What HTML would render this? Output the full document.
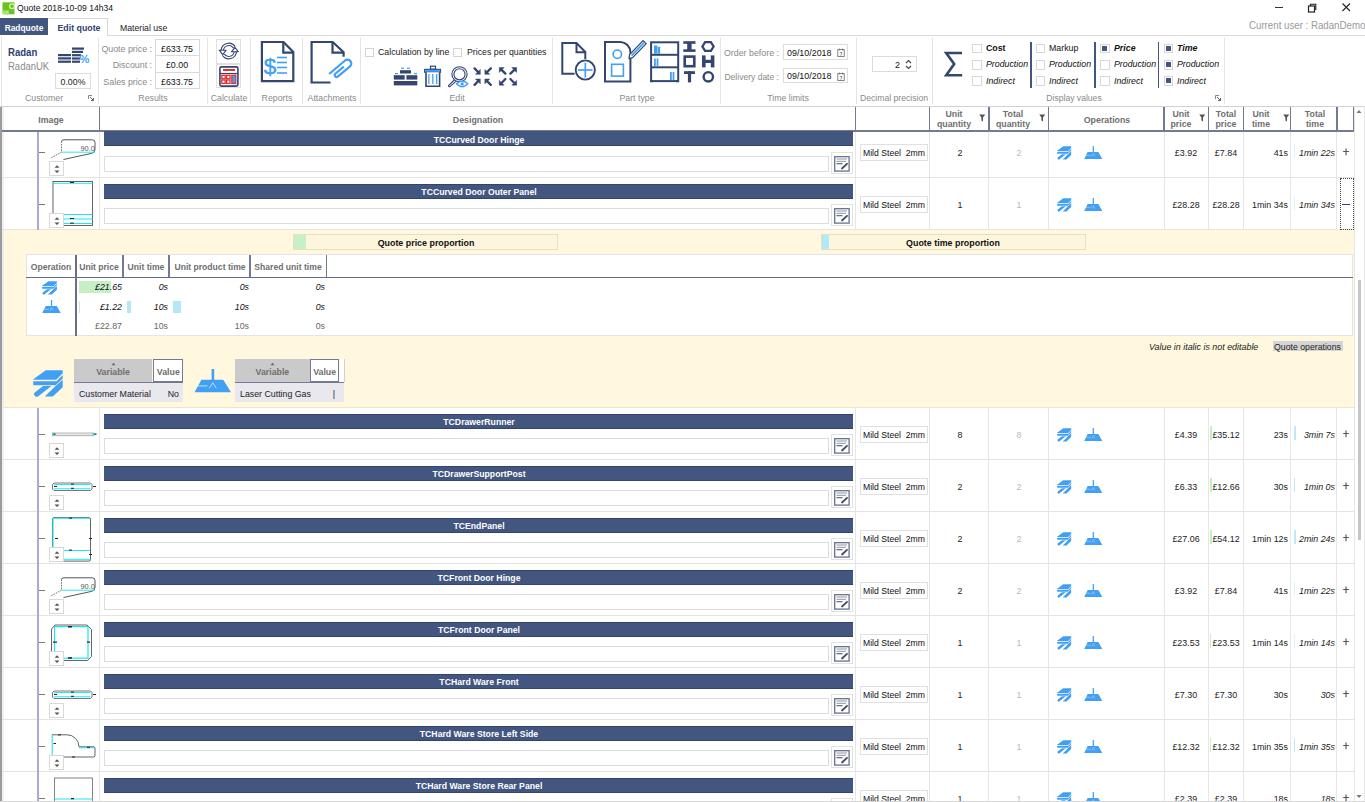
<!DOCTYPE html>
<html><head><meta charset="utf-8"><title>Quote</title>
<style>
html,body{margin:0;padding:0;width:1365px;height:802px;overflow:hidden;background:#fff}
body{position:relative;font-family:"Liberation Sans", sans-serif}
body>div,body>svg{position:absolute}
</style></head><body>
<div style="left:0px;top:0px;width:1365px;height:802px;background:#fff"></div>
<svg style="left:1.5px;top:2px;" width="13" height="13" viewBox="0 0 13 13"><rect x="0.5" y="0.3" width="12" height="12" fill="#6cc21c"/><circle cx="10" cy="4.2" r="2.4" fill="none" stroke="#d6f5b0" stroke-width="1.3"/><rect x="0.8" y="8.6" width="6" height="3.6" fill="#c9ee9e"/><text x="1.2" y="11.6" font-family="Liberation Sans" font-size="3.6" fill="#6cc21c">RQ</text></svg>
<div style="left:17px;top:4.00px;font-size:9.29px;line-height:9.29px;color:#111;font-weight:normal;font-style:normal;white-space:pre;transform:scaleX(0.9259);transform-origin:0 0;">Quote 2018-10-09 14h34</div>
<div style="left:1275px;top:7px;width:8px;height:1px;background:#333"></div>
<svg style="left:1307px;top:3px;" width="10" height="10" viewBox="0 0 10 10"><rect x="1.5" y="3" width="6" height="6" fill="none" stroke="#222" stroke-width="1.2"/><path d="M3.5 3V1.2h5.3v5.3H7.5" fill="none" stroke="#222" stroke-width="1.1"/></svg>
<svg style="left:1342px;top:3px;" width="9" height="9" viewBox="0 0 9 9"><path d="M0.5 0.5L8 8M8 0.5L0.5 8" stroke="#222" stroke-width="1.1"/></svg>
<div style="left:1249px;top:21.00px;font-size:10.48px;line-height:10.48px;color:#9a9a9a;font-weight:normal;font-style:normal;white-space:pre;transform:scaleX(0.9259);transform-origin:0 0;">Current user : RadanDemo</div>
<div style="left:0px;top:18px;width:48px;height:17px;background:#43567f"></div>
<div style="left:0.0px;width:48px;text-align:center;top:24.00px;font-size:9.07px;line-height:9.07px;color:#fff;font-weight:bold;font-style:normal;white-space:pre;transform:scaleX(0.9259);transform-origin:50% 0;">Radquote</div>
<div style="left:48px;top:18px;width:60px;height:18px;background:#fff;border-top:1px solid #d6d6d6;border-right:1px solid #d6d6d6;box-sizing:border-box"></div>
<div style="left:49.0px;width:60px;text-align:center;top:23.00px;font-size:9.50px;line-height:9.50px;color:#2f4270;font-weight:bold;font-style:normal;white-space:pre;transform:scaleX(0.9259);transform-origin:50% 0;">Edit quote</div>
<div style="left:120px;top:23.00px;font-size:9.40px;line-height:9.40px;color:#222;font-weight:normal;font-style:normal;white-space:pre;transform:scaleX(0.9259);transform-origin:0 0;">Material use</div>
<div style="left:108px;top:35px;width:1257px;height:1px;background:#d9d9d9"></div>
<div style="left:1px;top:36px;width:1px;height:70px;background:#e6e6e6"></div>
<div style="left:0px;top:105.5px;width:1365px;height:1.5px;background:#d2d2d2"></div>
<div style="left:97.5px;top:38px;width:1px;height:66px;background:#e3e3e3"></div>
<div style="left:207px;top:38px;width:1px;height:66px;background:#e3e3e3"></div>
<div style="left:249.5px;top:38px;width:1px;height:66px;background:#e3e3e3"></div>
<div style="left:302px;top:38px;width:1px;height:66px;background:#e3e3e3"></div>
<div style="left:359.5px;top:38px;width:1px;height:66px;background:#e3e3e3"></div>
<div style="left:552px;top:38px;width:1px;height:66px;background:#e3e3e3"></div>
<div style="left:720px;top:38px;width:1px;height:66px;background:#e3e3e3"></div>
<div style="left:855.5px;top:38px;width:1px;height:66px;background:#e3e3e3"></div>
<div style="left:932px;top:38px;width:1px;height:66px;background:#e3e3e3"></div>
<div style="left:1224px;top:38px;width:1px;height:66px;background:#e3e3e3"></div>
<div style="left:3.5px;width:80px;text-align:center;top:93.00px;font-size:9.50px;line-height:9.50px;color:#8a8a8a;font-weight:normal;font-style:normal;white-space:pre;transform:scaleX(0.9259);transform-origin:50% 0;">Customer</div>
<div style="left:113.0px;width:80px;text-align:center;top:93.00px;font-size:9.50px;line-height:9.50px;color:#8a8a8a;font-weight:normal;font-style:normal;white-space:pre;transform:scaleX(0.9259);transform-origin:50% 0;">Results</div>
<div style="left:199.0px;width:60px;text-align:center;top:93.00px;font-size:9.50px;line-height:9.50px;color:#8a8a8a;font-weight:normal;font-style:normal;white-space:pre;transform:scaleX(0.9259);transform-origin:50% 0;">Calculate</div>
<div style="left:246.5px;width:60px;text-align:center;top:93.00px;font-size:9.50px;line-height:9.50px;color:#8a8a8a;font-weight:normal;font-style:normal;white-space:pre;transform:scaleX(0.9259);transform-origin:50% 0;">Reports</div>
<div style="left:296.5px;width:70px;text-align:center;top:93.00px;font-size:9.50px;line-height:9.50px;color:#8a8a8a;font-weight:normal;font-style:normal;white-space:pre;transform:scaleX(0.9259);transform-origin:50% 0;">Attachments</div>
<div style="left:426.5px;width:60px;text-align:center;top:93.00px;font-size:9.50px;line-height:9.50px;color:#8a8a8a;font-weight:normal;font-style:normal;white-space:pre;transform:scaleX(0.9259);transform-origin:50% 0;">Edit</div>
<div style="left:597.0px;width:80px;text-align:center;top:93.00px;font-size:9.50px;line-height:9.50px;color:#8a8a8a;font-weight:normal;font-style:normal;white-space:pre;transform:scaleX(0.9259);transform-origin:50% 0;">Part type</div>
<div style="left:743.0px;width:90px;text-align:center;top:93.00px;font-size:9.50px;line-height:9.50px;color:#8a8a8a;font-weight:normal;font-style:normal;white-space:pre;transform:scaleX(0.9259);transform-origin:50% 0;">Time limits</div>
<div style="left:849.0px;width:90px;text-align:center;top:94.00px;font-size:9.34px;line-height:9.34px;color:#8a8a8a;font-weight:normal;font-style:normal;white-space:pre;transform:scaleX(0.9259);transform-origin:50% 0;">Decimal precision</div>
<div style="left:1028.5px;width:90px;text-align:center;top:94.00px;font-size:9.29px;line-height:9.29px;color:#8a8a8a;font-weight:normal;font-style:normal;white-space:pre;transform:scaleX(0.9259);transform-origin:50% 0;">Display values</div>
<svg style="left:88px;top:95px;" width="6" height="6" viewBox="0 0 6 6"><path d="M0.5 4V0.5H4" fill="none" stroke="#888" stroke-width="1"/><path d="M2 2L5.5 5.5M5.5 3V5.5H3" fill="none" stroke="#666" stroke-width="1"/></svg>
<svg style="left:1215px;top:95px;" width="6" height="6" viewBox="0 0 6 6"><path d="M0.5 4V0.5H4" fill="none" stroke="#888" stroke-width="1"/><path d="M2 2L5.5 5.5M5.5 3V5.5H3" fill="none" stroke="#666" stroke-width="1"/></svg>
<div style="left:7.5px;top:48.00px;font-size:10.37px;line-height:10.37px;color:#2f4270;font-weight:bold;font-style:normal;white-space:pre;transform:scaleX(0.9259);transform-origin:0 0;">Radan</div>
<div style="left:7.5px;top:62.00px;font-size:10.26px;line-height:10.26px;color:#8a8a8a;font-weight:normal;font-style:normal;white-space:pre;transform:scaleX(0.9259);transform-origin:0 0;">RadanUK</div>
<svg style="left:58px;top:47px;" width="32" height="16" viewBox="0 0 32 16"><g fill="#34466f"><rect x="0" y="7" width="13" height="2.2"/><rect x="0" y="10.3" width="13" height="2.2"/><rect x="0" y="13.6" width="13" height="2.2"/><rect x="14" y="0.5" width="12" height="2.2"/><rect x="14" y="3.8" width="11" height="2.2"/><rect x="14" y="7.1" width="9" height="2.2"/><rect x="14" y="10.4" width="8" height="2.2"/><rect x="14" y="13.6" width="8" height="2.2"/></g><text x="21.5" y="16" font-family="Liberation Sans" font-size="11" fill="#42a0f4" stroke="#42a0f4" stroke-width="0.3">%</text></svg>
<div style="left:55px;top:73px;width:35.5px;height:15.5px;border:1px solid #dcdcdc;box-sizing:border-box;background:#fff"></div>
<div style="left:54.75px;width:36px;text-align:center;top:77.00px;font-size:9.50px;line-height:9.50px;color:#222;font-weight:normal;font-style:normal;white-space:pre;transform:scaleX(0.9259);transform-origin:50% 0;">0.00%</div>
<div style="left:155px;top:39px;width:44.5px;height:49.5px;border:1px solid #d9d9d9;box-sizing:border-box;background:#fff"></div>
<div style="left:155px;top:55.3px;width:44.5px;height:1px;background:#d9d9d9"></div>
<div style="left:155px;top:71.8px;width:44.5px;height:1px;background:#d9d9d9"></div>
<div style="left:91.69999999999999px;width:60px;text-align:right;top:44.00px;font-size:9.56px;line-height:9.56px;color:#8a8a8a;font-weight:normal;font-style:normal;white-space:pre;transform:scaleX(0.9259);transform-origin:100% 0;">Quote price :</div>
<div style="left:155.25px;width:44px;text-align:center;top:44.00px;font-size:9.56px;line-height:9.56px;color:#111;font-weight:normal;font-style:normal;white-space:pre;transform:scaleX(0.9259);transform-origin:50% 0;">£633.75</div>
<div style="left:91.69999999999999px;width:60px;text-align:right;top:60.00px;font-size:9.56px;line-height:9.56px;color:#8a8a8a;font-weight:normal;font-style:normal;white-space:pre;transform:scaleX(0.9259);transform-origin:100% 0;">Discount :</div>
<div style="left:155.25px;width:44px;text-align:center;top:60.00px;font-size:9.56px;line-height:9.56px;color:#111;font-weight:normal;font-style:normal;white-space:pre;transform:scaleX(0.9259);transform-origin:50% 0;">£0.00</div>
<div style="left:91.69999999999999px;width:60px;text-align:right;top:77.00px;font-size:9.56px;line-height:9.56px;color:#8a8a8a;font-weight:normal;font-style:normal;white-space:pre;transform:scaleX(0.9259);transform-origin:100% 0;">Sales price :</div>
<div style="left:155.25px;width:44px;text-align:center;top:77.00px;font-size:9.56px;line-height:9.56px;color:#111;font-weight:normal;font-style:normal;white-space:pre;transform:scaleX(0.9259);transform-origin:50% 0;">£633.75</div>
<div style="left:216.3px;top:39.3px;width:24.7px;height:24.5px;border:1px solid #e0e0e0;box-sizing:border-box"></div>
<div style="left:216.3px;top:63.8px;width:24.7px;height:24.4px;border:1px solid #e0e0e0;box-sizing:border-box"></div>
<svg style="left:218px;top:41px;" width="22" height="21" viewBox="0 0 22 21"><g fill="none" stroke="#34466f" stroke-width="3.4"><path d="M4.23 9.42 A6.6 6.6 0 0 1 16.21 6.21"/><path d="M17.37 10.58 A6.6 6.6 0 0 1 5.39 13.79"/></g><g fill="none" stroke="#fff" stroke-width="1.3"><path d="M4.30 8.85 A6.6 6.6 0 0 1 16.00 5.94"/><path d="M17.30 11.15 A6.6 6.6 0 0 1 5.20 13.50"/></g><path d="M1.2 9.2 L8.2 9.2 L4.7 13.6 Z" fill="#fff" stroke="#34466f" stroke-width="1.1" stroke-linejoin="round"/><path d="M13.4 10.8 L20.4 10.8 L16.9 6.4 Z" fill="#fff" stroke="#34466f" stroke-width="1.1" stroke-linejoin="round"/></svg>
<svg style="left:219px;top:66px;" width="20" height="21" viewBox="0 0 20 21"><rect x="0.9" y="0.9" width="18" height="19.2" rx="1.5" fill="#fff" stroke="#34466f" stroke-width="1.6"/><rect x="4" y="3" width="12" height="2" fill="#e03030"/><line x1="1" y1="7.5" x2="19" y2="7.5" stroke="#34466f" stroke-width="1.2"/><g fill="none" stroke="#e03030" stroke-width="1.3"><rect x="2.8" y="9.3" width="3.4" height="3.4"/><rect x="7.6" y="9.3" width="3.4" height="3.4"/><rect x="2.8" y="14" width="3.4" height="3.4"/><rect x="7.6" y="14" width="3.4" height="3.4"/></g><rect x="12.8" y="9.2" width="4" height="8.4" fill="#42a0f4" stroke="#e03030" stroke-width="1.2"/></svg>
<svg style="left:259px;top:39px;" width="38" height="46" viewBox="0 0 38 46"><path d="M2.9 3 H24.5 L34.3 13 V42.2 H2.9 Z" fill="#fff" stroke="#34466f" stroke-width="2.2"/><path d="M24.3 3 V13.6 H34.3" fill="none" stroke="#34466f" stroke-width="2.2"/><text x="4.8" y="35" font-family="Liberation Sans" font-size="22.5" fill="#42a0f4" stroke="#42a0f4" stroke-width="0.4">$</text><g stroke="#42a0f4" stroke-width="1.6"><line x1="18" y1="18.5" x2="28" y2="18.5"/><line x1="18" y1="23.5" x2="28" y2="23.5"/><line x1="18" y1="28.5" x2="28" y2="28.5"/><line x1="18" y1="34" x2="28" y2="34"/></g></svg>
<svg style="left:308px;top:39px;" width="46" height="46" viewBox="0 0 46 46"><path d="M22.5 43.5 H3.6 V3 H24.7 L35.6 13.2 V17.8" fill="none" stroke="#34466f" stroke-width="2.2"/><path d="M24.5 3 V13.6 H35.6" fill="none" stroke="#34466f" stroke-width="2.2"/><path d="M21.07 34.99 L37.16 21.49 A3.8 3.8 0 0 1 42.04 27.31 L29.78 37.6 A1.9 1.9 0 0 1 27.34 34.7 L35.8 27.6" fill="none" stroke="#42a0f4" stroke-width="2.2"/></svg>
<div style="left:364.5px;top:47.5px;width:9px;height:9px;border:1px solid #d4d4d4;box-sizing:border-box;background:#fff"></div>
<div style="left:453px;top:47.5px;width:9px;height:9px;border:1px solid #d4d4d4;box-sizing:border-box;background:#fff"></div>
<div style="left:377.5px;top:47.00px;font-size:9.50px;line-height:9.50px;color:#222;font-weight:normal;font-style:normal;white-space:pre;transform:scaleX(0.9259);transform-origin:0 0;">Calculation by line</div>
<div style="left:466.5px;top:47.00px;font-size:9.47px;line-height:9.47px;color:#222;font-weight:normal;font-style:normal;white-space:pre;transform:scaleX(0.9259);transform-origin:0 0;">Prices per quantities</div>
<svg style="left:393px;top:66px;" width="26" height="21" viewBox="0 0 26 21"><g fill="#34466f"><rect x="7" y="4.2" width="11" height="3.3"/><rect x="0.8" y="9.2" width="10.9" height="4.4"/><rect x="13.4" y="9.2" width="10.9" height="4.4"/><rect x="0.8" y="15" width="23.5" height="4.4"/></g><g fill="#42a0f4"><rect x="8" y="1.6" width="3" height="1.2"/><rect x="14" y="1.6" width="3" height="1.2"/><rect x="2" y="7" width="3" height="1.2"/><rect x="21" y="7" width="3" height="1.2"/></g></svg>
<svg style="left:423px;top:65px;" width="19" height="23" viewBox="0 0 19 23"><rect x="7.5" y="1.2" width="5" height="3" fill="#fff" stroke="#34466f" stroke-width="1.2"/><rect x="1.6" y="4.3" width="16" height="3" fill="#42a0f4" stroke="#34466f" stroke-width="1"/><path d="M3 7.3 V21.3 H16.6 V7.3" fill="#fff" stroke="#34466f" stroke-width="1.6"/><g stroke="#42a0f4" stroke-width="1.3"><line x1="5.9" y1="9" x2="5.9" y2="19"/><line x1="9.8" y1="9" x2="9.8" y2="19"/><line x1="13.7" y1="9" x2="13.7" y2="19"/></g></svg>
<svg style="left:446px;top:64px;" width="24" height="24" viewBox="0 0 24 24"><circle cx="13.5" cy="10.3" r="7.6" fill="none" stroke="#34466f" stroke-width="1.1"/><circle cx="13.5" cy="10.3" r="5.6" fill="none" stroke="#34466f" stroke-width="1.1"/><path d="M8.3 16 L2.5 21.5 A1 1 0 0 0 4 22.6 L9.8 17.3" fill="none" stroke="#34466f" stroke-width="1.1"/><path d="M10.5 19.8 Q16 14.2 21.8 19.8 Q16 25.4 10.5 19.8 Z" fill="#fff" stroke="#42a0f4" stroke-width="1.5"/><circle cx="16.2" cy="19.8" r="1.6" fill="#42a0f4"/></svg>
<svg style="left:473px;top:67px;" width="20" height="20" viewBox="0 0 20 20"><line x1="1.6" y1="1.4" x2="5.8" y2="5.8" stroke="#34466f" stroke-width="2.3" stroke-linecap="round"/><path d="M7.3 7.3 L2.5 7.3 L7.3 2.5 Z" fill="#34466f" stroke="#34466f" stroke-width="0.5" stroke-linejoin="miter"/><line x1="17.8" y1="1.4" x2="13.4" y2="5.8" stroke="#34466f" stroke-width="2.3" stroke-linecap="round"/><path d="M11.9 7.3 L16.7 7.3 L11.9 2.5 Z" fill="#34466f" stroke="#34466f" stroke-width="0.5" stroke-linejoin="miter"/><line x1="1.6" y1="17.9" x2="5.8" y2="13.5" stroke="#34466f" stroke-width="2.3" stroke-linecap="round"/><path d="M7.3 12 L2.5 12 L7.3 16.8 Z" fill="#34466f" stroke="#34466f" stroke-width="0.5" stroke-linejoin="miter"/><line x1="17.8" y1="17.9" x2="13.4" y2="13.5" stroke="#34466f" stroke-width="2.3" stroke-linecap="round"/><path d="M11.9 12 L16.7 12 L11.9 16.8 Z" fill="#34466f" stroke="#34466f" stroke-width="0.5" stroke-linejoin="miter"/></svg>
<svg style="left:498px;top:67px;" width="20" height="20" viewBox="0 0 20 20"><line x1="7.4" y1="6.6" x2="2.8" y2="2.1" stroke="#34466f" stroke-width="2.3" stroke-linecap="round"/><path d="M1.3 0.6 L6.1 0.6 L1.3 5.3999999999999995 Z" fill="#34466f" stroke="#34466f" stroke-width="0.5" stroke-linejoin="miter"/><line x1="12.4" y1="6.6" x2="17.1" y2="2.1" stroke="#34466f" stroke-width="2.3" stroke-linecap="round"/><path d="M18.6 0.6 L13.8 0.6 L18.6 5.3999999999999995 Z" fill="#34466f" stroke="#34466f" stroke-width="0.5" stroke-linejoin="miter"/><line x1="7.4" y1="12" x2="2.8" y2="16.7" stroke="#34466f" stroke-width="2.3" stroke-linecap="round"/><path d="M1.3 18.2 L6.1 18.2 L1.3 13.399999999999999 Z" fill="#34466f" stroke="#34466f" stroke-width="0.5" stroke-linejoin="miter"/><line x1="12.4" y1="12" x2="17.1" y2="16.7" stroke="#34466f" stroke-width="2.3" stroke-linecap="round"/><path d="M18.6 18.2 L13.8 18.2 L18.6 13.399999999999999 Z" fill="#34466f" stroke="#34466f" stroke-width="0.5" stroke-linejoin="miter"/></svg>
<svg style="left:559px;top:40px;" width="40" height="44" viewBox="0 0 40 44"><path d="M15.5 33.8 H3.3 V3 H17.5 L26.3 12 V19" fill="none" stroke="#34466f" stroke-width="2"/><path d="M17.5 3 V12.3 H26.3" fill="none" stroke="#34466f" stroke-width="2"/><circle cx="26.3" cy="30" r="9.6" fill="#fff" stroke="#34466f" stroke-width="1.9"/><g stroke="#42a0f4" stroke-width="1.7"><line x1="19" y1="30" x2="33.5" y2="30"/><line x1="26.3" y1="22.7" x2="26.3" y2="37.5"/></g></svg>
<svg style="left:602px;top:39px;" width="46" height="45" viewBox="0 0 46 45"><path d="M3 2.9 H18.5 A10.5 10.5 0 0 1 28.4 13 V42.4 H3 Z" fill="#fff" stroke="#34466f" stroke-width="2"/><circle cx="15.3" cy="15.2" r="4.2" fill="none" stroke="#42a0f4" stroke-width="1.6"/><rect x="9.6" y="25.3" width="11.8" height="11.8" fill="none" stroke="#42a0f4" stroke-width="1.6"/><path d="M41.06 1.6 L44.2 4.6 L30.6 18.6 L27 19.6 L27.6 15.6 Z" fill="#fff" stroke="#34466f" stroke-width="1.3" stroke-linejoin="round"/><line x1="29.6" y1="16.6" x2="42" y2="3.7" stroke="#42a0f4" stroke-width="1.7"/></svg>
<svg style="left:648px;top:39px;" width="33" height="45" viewBox="0 0 33 45"><rect x="3.1" y="3.3" width="27.1" height="38.8" fill="#fff" stroke="#34466f" stroke-width="2"/><line x1="3" y1="15.8" x2="30" y2="15.8" stroke="#34466f" stroke-width="2"/><line x1="3" y1="28.3" x2="30" y2="28.3" stroke="#34466f" stroke-width="2"/><rect x="2.2" y="41" width="3" height="2.2" fill="#34466f"/><rect x="28" y="41" width="3" height="2.2" fill="#34466f"/><g fill="#42a0f4"><rect x="6" y="6.5" width="3.3" height="8.3"/><rect x="9.6" y="7.8" width="2.5" height="7"/><rect x="6" y="19.5" width="1.8" height="7.8"/><rect x="8.6" y="19.5" width="1.8" height="7.8"/><rect x="22" y="33" width="1.8" height="8"/><rect x="24.6" y="33" width="1.8" height="8"/></g></svg>
<svg style="left:682px;top:40px;" width="36" height="44" viewBox="0 0 36 44"><g fill="#34466f"><rect x="1.3" y="1.2" width="12.2" height="2.6"/><rect x="1.3" y="9.3" width="12.2" height="2.6"/><rect x="5.2" y="3" width="4.4" height="7"/><rect x="3" y="56.4" width="0" height="0"/></g><rect x="2.7" y="16.6" width="9.6" height="9.6" fill="none" stroke="#34466f" stroke-width="2.6"/><g fill="#34466f"><rect x="2" y="31.2" width="11" height="2.8"/><rect x="5.9" y="31.2" width="3.2" height="11.2"/></g><path d="M20.4 6.5 L23.1 2.2 H28.9 L31.6 6.5 L28.9 10.8 H23.1 Z" fill="none" stroke="#34466f" stroke-width="2.3"/><g fill="#34466f"><rect x="20" y="15.4" width="3.6" height="12"/><rect x="28.8" y="15.4" width="3.6" height="12"/><rect x="22" y="19.8" width="8" height="3.2"/></g><circle cx="26.3" cy="36.8" r="4.7" fill="none" stroke="#34466f" stroke-width="2.4"/></svg>
<div style="left:709px;width:70px;text-align:right;top:48.00px;font-size:9.55px;line-height:9.55px;color:#8a8a8a;font-weight:normal;font-style:normal;white-space:pre;transform:scaleX(0.9259);transform-origin:100% 0;">Order before :</div>
<div style="left:709px;width:70px;text-align:right;top:73.00px;font-size:9.23px;line-height:9.23px;color:#8a8a8a;font-weight:normal;font-style:normal;white-space:pre;transform:scaleX(0.9259);transform-origin:100% 0;">Delivery date :</div>
<div style="left:783.1px;top:44.3px;width:64.6px;height:15.4px;border:1px solid #dcdcdc;box-sizing:border-box;background:#fff"></div>
<div style="left:786.5px;top:48.00px;font-size:9.61px;line-height:9.61px;color:#111;font-weight:normal;font-style:normal;white-space:pre;transform:scaleX(0.9259);transform-origin:0 0;">09/10/2018</div>
<svg style="left:837px;top:47.8px;" width="8" height="9" viewBox="0 0 8 9"><rect x="0.8" y="1.5" width="6.4" height="7" fill="none" stroke="#777" stroke-width="0.9"/><path d="M2.5 0.5V2.5M5.5 0.5V2.5M2.8 4.5H5L3.8 7.5" fill="none" stroke="#777" stroke-width="0.8"/></svg>
<div style="left:783.1px;top:68px;width:64.6px;height:15.4px;border:1px solid #dcdcdc;box-sizing:border-box;background:#fff"></div>
<div style="left:786.5px;top:71.00px;font-size:9.61px;line-height:9.61px;color:#111;font-weight:normal;font-style:normal;white-space:pre;transform:scaleX(0.9259);transform-origin:0 0;">09/10/2018</div>
<svg style="left:837px;top:71.5px;" width="8" height="9" viewBox="0 0 8 9"><rect x="0.8" y="1.5" width="6.4" height="7" fill="none" stroke="#777" stroke-width="0.9"/><path d="M2.5 0.5V2.5M5.5 0.5V2.5M2.8 4.5H5L3.8 7.5" fill="none" stroke="#777" stroke-width="0.8"/></svg>
<div style="left:872px;top:56.2px;width:44.7px;height:15.4px;border:1px solid #dcdcdc;box-sizing:border-box;background:#fff"></div>
<div style="left:895px;top:60.00px;font-size:9.72px;line-height:9.72px;color:#111;font-weight:normal;font-style:normal;white-space:pre;transform:scaleX(0.9259);transform-origin:0 0;">2</div>
<svg style="left:905px;top:58.5px;" width="7" height="11" viewBox="0 0 7 11"><path d="M1 4L3.5 1.5L6 4" fill="none" stroke="#444" stroke-width="1.1"/><path d="M1 7L3.5 9.5L6 7" fill="none" stroke="#444" stroke-width="1.1"/></svg>
<svg style="left:943px;top:50px;" width="22" height="28" viewBox="0 0 22 28"><path d="M19 3 H3.2 L11.2 14 L3.2 25.2 H19.2" fill="none" stroke="#34466f" stroke-width="2.6" stroke-linejoin="miter"/></svg>
<div style="left:972.3px;top:43.8px;width:9.6px;height:9.6px;border:1px solid #d8d8d8;box-sizing:border-box;background:#fff"></div>
<div style="left:985.8px;top:43.00px;font-size:9.50px;line-height:9.50px;color:#111;font-weight:bold;font-style:normal;white-space:pre;transform:scaleX(0.9259);transform-origin:0 0;">Cost</div>
<div style="left:972.3px;top:60px;width:9.6px;height:9.6px;border:1px solid #d8d8d8;box-sizing:border-box;background:#fff"></div>
<div style="left:985.8px;top:59.00px;font-size:9.50px;line-height:9.50px;color:#111;font-weight:normal;font-style:italic;white-space:pre;transform:scaleX(0.9259);transform-origin:0 0;">Production</div>
<div style="left:972.3px;top:76px;width:9.6px;height:9.6px;border:1px solid #d8d8d8;box-sizing:border-box;background:#fff"></div>
<div style="left:985.8px;top:76.00px;font-size:9.50px;line-height:9.50px;color:#111;font-weight:normal;font-style:italic;white-space:pre;transform:scaleX(0.9259);transform-origin:0 0;">Indirect</div>
<div style="left:1035.8px;top:43.8px;width:9.6px;height:9.6px;border:1px solid #d8d8d8;box-sizing:border-box;background:#fff"></div>
<div style="left:1049.3px;top:43.00px;font-size:9.50px;line-height:9.50px;color:#111;font-weight:normal;font-style:normal;white-space:pre;transform:scaleX(0.9259);transform-origin:0 0;">Markup</div>
<div style="left:1035.8px;top:60px;width:9.6px;height:9.6px;border:1px solid #d8d8d8;box-sizing:border-box;background:#fff"></div>
<div style="left:1049.3px;top:59.00px;font-size:9.50px;line-height:9.50px;color:#111;font-weight:normal;font-style:italic;white-space:pre;transform:scaleX(0.9259);transform-origin:0 0;">Production</div>
<div style="left:1035.8px;top:76px;width:9.6px;height:9.6px;border:1px solid #d8d8d8;box-sizing:border-box;background:#fff"></div>
<div style="left:1049.3px;top:76.00px;font-size:9.50px;line-height:9.50px;color:#111;font-weight:normal;font-style:italic;white-space:pre;transform:scaleX(0.9259);transform-origin:0 0;">Indirect</div>
<div style="left:1100px;top:43.8px;width:9.6px;height:9.6px;border:1px solid #d8d8d8;box-sizing:border-box;background:#fff"></div>
<div style="left:1102.3px;top:46.099999999999994px;width:5px;height:5px;background:#43567f"></div>
<div style="left:1113.5px;top:43.00px;font-size:9.50px;line-height:9.50px;color:#111;font-weight:bold;font-style:italic;white-space:pre;transform:scaleX(0.9259);transform-origin:0 0;">Price</div>
<div style="left:1100px;top:60px;width:9.6px;height:9.6px;border:1px solid #d8d8d8;box-sizing:border-box;background:#fff"></div>
<div style="left:1113.5px;top:59.00px;font-size:9.50px;line-height:9.50px;color:#111;font-weight:normal;font-style:italic;white-space:pre;transform:scaleX(0.9259);transform-origin:0 0;">Production</div>
<div style="left:1100px;top:76px;width:9.6px;height:9.6px;border:1px solid #d8d8d8;box-sizing:border-box;background:#fff"></div>
<div style="left:1113.5px;top:76.00px;font-size:9.50px;line-height:9.50px;color:#111;font-weight:normal;font-style:italic;white-space:pre;transform:scaleX(0.9259);transform-origin:0 0;">Indirect</div>
<div style="left:1163.9px;top:43.8px;width:9.6px;height:9.6px;border:1px solid #d8d8d8;box-sizing:border-box;background:#fff"></div>
<div style="left:1166.2px;top:46.099999999999994px;width:5px;height:5px;background:#43567f"></div>
<div style="left:1177.4px;top:43.00px;font-size:9.50px;line-height:9.50px;color:#111;font-weight:bold;font-style:italic;white-space:pre;transform:scaleX(0.9259);transform-origin:0 0;">Time</div>
<div style="left:1163.9px;top:60px;width:9.6px;height:9.6px;border:1px solid #d8d8d8;box-sizing:border-box;background:#fff"></div>
<div style="left:1166.2px;top:62.3px;width:5px;height:5px;background:#43567f"></div>
<div style="left:1177.4px;top:59.00px;font-size:9.50px;line-height:9.50px;color:#111;font-weight:normal;font-style:italic;white-space:pre;transform:scaleX(0.9259);transform-origin:0 0;">Production</div>
<div style="left:1163.9px;top:76px;width:9.6px;height:9.6px;border:1px solid #d8d8d8;box-sizing:border-box;background:#fff"></div>
<div style="left:1166.2px;top:78.3px;width:5px;height:5px;background:#43567f"></div>
<div style="left:1177.4px;top:76.00px;font-size:9.50px;line-height:9.50px;color:#111;font-weight:normal;font-style:italic;white-space:pre;transform:scaleX(0.9259);transform-origin:0 0;">Indirect</div>
<div style="left:1030.2px;top:42.3px;width:1.6px;height:46.2px;background:#43567f"></div>
<div style="left:1094px;top:42.3px;width:1.6px;height:46.2px;background:#43567f"></div>
<div style="left:1157.8px;top:42.3px;width:1.6px;height:46.2px;background:#43567f"></div>
<div style="left:0px;top:106.5px;width:1.5px;height:695.5px;background:#9c9c9c"></div>
<div style="left:1.5px;top:106.5px;width:2px;height:695.5px;background:#f0f0f0"></div>
<div style="left:98.6px;top:107px;width:1.8px;height:24px;background:#747a95"></div>
<div style="left:854.6px;top:107px;width:1.8px;height:24px;background:#747a95"></div>
<div style="left:928.6px;top:107px;width:1.8px;height:24px;background:#747a95"></div>
<div style="left:987.8000000000001px;top:107px;width:1.8px;height:24px;background:#747a95"></div>
<div style="left:1047.6999999999998px;top:107px;width:1.8px;height:24px;background:#747a95"></div>
<div style="left:1163.1px;top:107px;width:1.8px;height:24px;background:#747a95"></div>
<div style="left:1207.6999999999998px;top:107px;width:1.8px;height:24px;background:#747a95"></div>
<div style="left:1242.6px;top:107px;width:1.8px;height:24px;background:#747a95"></div>
<div style="left:1289.5px;top:107px;width:1.8px;height:24px;background:#747a95"></div>
<div style="left:1335.8px;top:107px;width:1.8px;height:24px;background:#747a95"></div>
<div style="left:1353.1px;top:107px;width:1.8px;height:24px;background:#747a95"></div>
<div style="left:1.5px;top:130.2px;width:1353px;height:1.8px;background:#747a95"></div>
<div style="left:10.799999999999997px;width:80px;text-align:center;top:115.00px;font-size:9.50px;line-height:9.50px;color:#6f6f6f;font-weight:bold;font-style:normal;white-space:pre;transform:scaleX(0.9259);transform-origin:50% 0;">Image</div>
<div style="left:428.4px;width:100px;text-align:center;top:115.00px;font-size:9.50px;line-height:9.50px;color:#6f6f6f;font-weight:bold;font-style:normal;white-space:pre;transform:scaleX(0.9259);transform-origin:50% 0;">Designation</div>
<div style="left:1056.8px;width:100px;text-align:center;top:115.00px;font-size:9.50px;line-height:9.50px;color:#6f6f6f;font-weight:bold;font-style:normal;white-space:pre;transform:scaleX(0.9259);transform-origin:50% 0;">Operations</div>
<div style="left:923.6px;width:60px;text-align:center;top:109.00px;font-size:9.50px;line-height:9.50px;color:#6f6f6f;font-weight:bold;font-style:normal;white-space:pre;transform:scaleX(0.9259);transform-origin:50% 0;">Unit</div>
<div style="left:923.6px;width:60px;text-align:center;top:119.00px;font-size:9.50px;line-height:9.50px;color:#6f6f6f;font-weight:bold;font-style:normal;white-space:pre;transform:scaleX(0.9259);transform-origin:50% 0;">quantity</div>
<svg style="left:978.5px;top:114.3px;" width="7" height="8" viewBox="0 0 7 8"><path d="M0.2 0.4 H6.2 L4 3.4 V7.6 L2.4 6.6 V3.4 Z" fill="#555"/></svg>
<div style="left:983.0px;width:60px;text-align:center;top:109.00px;font-size:9.50px;line-height:9.50px;color:#6f6f6f;font-weight:bold;font-style:normal;white-space:pre;transform:scaleX(0.9259);transform-origin:50% 0;">Total</div>
<div style="left:983.0px;width:60px;text-align:center;top:119.00px;font-size:9.50px;line-height:9.50px;color:#6f6f6f;font-weight:bold;font-style:normal;white-space:pre;transform:scaleX(0.9259);transform-origin:50% 0;">quantity</div>
<svg style="left:1038.5px;top:114.3px;" width="7" height="8" viewBox="0 0 7 8"><path d="M0.2 0.4 H6.2 L4 3.4 V7.6 L2.4 6.6 V3.4 Z" fill="#555"/></svg>
<div style="left:1151.0px;width:60px;text-align:center;top:109.00px;font-size:9.50px;line-height:9.50px;color:#6f6f6f;font-weight:bold;font-style:normal;white-space:pre;transform:scaleX(0.9259);transform-origin:50% 0;">Unit</div>
<div style="left:1151.0px;width:60px;text-align:center;top:119.00px;font-size:9.50px;line-height:9.50px;color:#6f6f6f;font-weight:bold;font-style:normal;white-space:pre;transform:scaleX(0.9259);transform-origin:50% 0;">price</div>
<svg style="left:1198.5px;top:114.3px;" width="7" height="8" viewBox="0 0 7 8"><path d="M0.2 0.4 H6.2 L4 3.4 V7.6 L2.4 6.6 V3.4 Z" fill="#555"/></svg>
<div style="left:1196.0px;width:60px;text-align:center;top:109.00px;font-size:9.50px;line-height:9.50px;color:#6f6f6f;font-weight:bold;font-style:normal;white-space:pre;transform:scaleX(0.9259);transform-origin:50% 0;">Total</div>
<div style="left:1196.0px;width:60px;text-align:center;top:119.00px;font-size:9.50px;line-height:9.50px;color:#6f6f6f;font-weight:bold;font-style:normal;white-space:pre;transform:scaleX(0.9259);transform-origin:50% 0;">price</div>
<div style="left:1231.0px;width:60px;text-align:center;top:109.00px;font-size:9.50px;line-height:9.50px;color:#6f6f6f;font-weight:bold;font-style:normal;white-space:pre;transform:scaleX(0.9259);transform-origin:50% 0;">Unit</div>
<div style="left:1231.0px;width:60px;text-align:center;top:119.00px;font-size:9.50px;line-height:9.50px;color:#6f6f6f;font-weight:bold;font-style:normal;white-space:pre;transform:scaleX(0.9259);transform-origin:50% 0;">time</div>
<svg style="left:1282.5px;top:114.3px;" width="7" height="8" viewBox="0 0 7 8"><path d="M0.2 0.4 H6.2 L4 3.4 V7.6 L2.4 6.6 V3.4 Z" fill="#555"/></svg>
<div style="left:1284.5px;width:60px;text-align:center;top:109.00px;font-size:9.50px;line-height:9.50px;color:#6f6f6f;font-weight:bold;font-style:normal;white-space:pre;transform:scaleX(0.9259);transform-origin:50% 0;">Total</div>
<div style="left:1284.5px;width:60px;text-align:center;top:119.00px;font-size:9.50px;line-height:9.50px;color:#6f6f6f;font-weight:bold;font-style:normal;white-space:pre;transform:scaleX(0.9259);transform-origin:50% 0;">time</div>
<div style="left:1.5px;top:176.8px;width:1353px;height:1.5px;background:#e4e4e4"></div>
<div style="left:99.0px;top:131.5px;width:1px;height:46.0px;background:#e6e6e6"></div>
<div style="left:855.0px;top:131.5px;width:1px;height:46.0px;background:#e6e6e6"></div>
<div style="left:929.0px;top:131.5px;width:1px;height:46.0px;background:#e6e6e6"></div>
<div style="left:988.2px;top:131.5px;width:1px;height:46.0px;background:#e6e6e6"></div>
<div style="left:1048.1px;top:131.5px;width:1px;height:46.0px;background:#e6e6e6"></div>
<div style="left:1163.5px;top:131.5px;width:1px;height:46.0px;background:#e6e6e6"></div>
<div style="left:1208.1px;top:131.5px;width:1px;height:46.0px;background:#e6e6e6"></div>
<div style="left:1243.0px;top:131.5px;width:1px;height:46.0px;background:#e6e6e6"></div>
<div style="left:1289.9px;top:131.5px;width:1px;height:46.0px;background:#e6e6e6"></div>
<div style="left:1336.2px;top:131.5px;width:1px;height:46.0px;background:#e6e6e6"></div>
<div style="left:38px;top:152.0px;width:7px;height:1px;background:#777"></div>
<svg style="left:49px;top:138.5px;" width="48" height="25" viewBox="0 0 48 25"><path d="M12.5 2.5 Q12.5 0.8 15 0.8 H43.5 Q46 0.8 46 3.5 V10.5 Q46 14 42 14.5 L14.5 20.5" fill="none" stroke="#444" stroke-width="0.9"/><path d="M12.5 2.5 V13.2 L2.2 18.8" fill="none" stroke="#555" stroke-width="0.8" stroke-dasharray="1.6 1"/><line x1="12.5" y1="13.2" x2="46" y2="13.2" stroke="#19e6ee" stroke-width="0.9"/><text x="31.5" y="12.2" font-family="Liberation Sans" font-size="7.4" fill="#555">90.0</text></svg>
<div style="left:49.3px;top:161.1px;width:14.4px;height:14.6px;border:1px solid #d8d8d8;box-sizing:border-box;background:#fff"></div>
<svg style="left:53.5px;top:164.5px;" width="6" height="9" viewBox="0 0 6 9"><path d="M0.5 2.8 L3 0.3 L5.5 2.8 Z M0.5 5.6 L3 8.1 L5.5 5.6 Z" fill="#555"/></svg>
<div style="left:104px;top:131px;width:749px;height:15px;background:#43567f;border-bottom:1px solid #34426f;box-sizing:border-box"></div>
<div style="left:178.5px;width:600px;text-align:center;top:136.00px;font-size:8.87px;line-height:8.87px;color:#fff;font-weight:bold;font-style:normal;white-space:pre;transform:scaleX(0.9804);transform-origin:50% 0;">TCCurved Door Hinge</div>
<div style="left:104px;top:155.5px;width:724.5px;height:16.3px;border:1px solid #dcdcdc;box-sizing:border-box;background:#fff"></div>
<div style="left:830.5px;top:152.2px;width:22px;height:22.2px;border:1px solid #e2e2e2;box-sizing:border-box;background:#fff"></div>
<svg style="left:834px;top:156.0px;" width="16" height="16" viewBox="0 0 16 16"><rect x="0.7" y="0.7" width="14.4" height="14.4" fill="#fff" stroke="#66728c" stroke-width="1.3"/><g stroke="#8a94a8" stroke-width="1"><line x1="2.5" y1="3" x2="13" y2="3"/><line x1="2.5" y1="5.3" x2="12" y2="5.3"/></g><line x1="2.5" y1="7.7" x2="8.5" y2="7.7" stroke="#4f5a72" stroke-width="1.1"/><line x1="8" y1="12.5" x2="13" y2="7.8" stroke="#3d4a66" stroke-width="1.8" stroke-linecap="round"/></svg>
<div style="left:860.4px;top:144.0px;width:67.4px;height:16.5px;border:1px solid #e0e0e0;box-sizing:border-box;background:#fff"></div>
<div style="left:863px;top:149.00px;font-size:9.34px;line-height:9.34px;color:#111;font-weight:normal;font-style:normal;white-space:pre;transform:scaleX(0.9259);transform-origin:0 0;">Mild Steel  2mm</div>
<div style="left:939.5px;width:40px;text-align:center;top:148.00px;font-size:9.61px;line-height:9.61px;color:#222;font-weight:normal;font-style:normal;white-space:pre;transform:scaleX(0.9259);transform-origin:50% 0;">2</div>
<div style="left:998.6px;width:40px;text-align:center;top:148.00px;font-size:9.61px;line-height:9.61px;color:#b8b8b8;font-weight:normal;font-style:normal;white-space:pre;transform:scaleX(0.9259);transform-origin:50% 0;">2</div>
<svg style="left:1056.5px;top:146.0px;overflow:visible" width="14.5" height="14" viewBox="0 0 14.5 14"><svg viewBox="0 0 30 28" width="14.5" height="14" preserveAspectRatio="none"><clipPath id="mc1"><rect x="0" y="16.4" width="30" height="12"/></clipPath><g fill="#42a0f4"><path d="M0.3 9.5 L12.8 0.3 H29.7 V3.4 L23.2 10 H0.3 Z"/><path d="M0.3 11.4 H23.6 L29.7 5.2 V8.6 L22.6 15.4 H0.3 Z"/><path d="M11.8 27 L22.6 16.4 L29.7 9.9 V17.6 L19.8 27 Z"/></g><line x1="3.7" y1="24.6" x2="16.5" y2="14.5" stroke="#42a0f4" stroke-width="5.2" stroke-linecap="round" clip-path="url(#mc1)"/></svg></svg>
<svg style="left:1084px;top:145.5px;overflow:visible" width="18.5" height="13" viewBox="0 0 18.5 13"><svg viewBox="0 0 38 24" width="18.5" height="13" preserveAspectRatio="none"><rect x="17.8" y="0" width="2.6" height="11.5" fill="#42a0f4"/><path d="M7.5 11 H29.5 L37.6 23.8 H0.4 Z" fill="#42a0f4"/><path d="M4 17.2 H13.5 M15.5 19.5 L19 14 L22.5 19.5" fill="none" stroke="#cfe6fb" stroke-width="0.9"/></svg></svg>
<div style="left:1164.4px;width:44px;text-align:center;top:148.00px;font-size:9.61px;line-height:9.61px;color:#222;font-weight:normal;font-style:normal;white-space:pre;transform:scaleX(0.9259);transform-origin:50% 0;">£3.92</div>
<div style="left:1209.2px;width:34px;text-align:center;top:148.00px;font-size:9.61px;line-height:9.61px;color:#222;font-weight:normal;font-style:normal;white-space:pre;transform:scaleX(0.9259);transform-origin:50% 0;">£7.84</div>
<div style="left:1244px;width:44px;text-align:right;top:148.00px;font-size:9.61px;line-height:9.61px;color:#222;font-weight:normal;font-style:normal;white-space:pre;transform:scaleX(0.9259);transform-origin:100% 0;">41s</div>
<div style="left:1291px;width:44px;text-align:right;top:148.00px;font-size:9.61px;line-height:9.61px;color:#222;font-weight:normal;font-style:italic;white-space:pre;transform:scaleX(0.9259);transform-origin:100% 0;">1min 22s</div>
<div style="left:1294px;top:144.0px;width:1.2px;height:13.8px;background:#dcf3fb"></div>
<div style="left:1339.4px;width:14px;text-align:center;top:147.00px;font-size:11.88px;line-height:11.88px;color:#555;font-weight:normal;font-style:normal;white-space:pre;transform:scaleX(0.9259);transform-origin:50% 0;-webkit-text-stroke:0.3px #555;">+</div>
<div style="left:1.5px;top:228.8px;width:1353px;height:1.5px;background:#e4e4e4"></div>
<div style="left:99.0px;top:177.5px;width:1px;height:52px;background:#e6e6e6"></div>
<div style="left:855.0px;top:177.5px;width:1px;height:52px;background:#e6e6e6"></div>
<div style="left:929.0px;top:177.5px;width:1px;height:52px;background:#e6e6e6"></div>
<div style="left:988.2px;top:177.5px;width:1px;height:52px;background:#e6e6e6"></div>
<div style="left:1048.1px;top:177.5px;width:1px;height:52px;background:#e6e6e6"></div>
<div style="left:1163.5px;top:177.5px;width:1px;height:52px;background:#e6e6e6"></div>
<div style="left:1208.1px;top:177.5px;width:1px;height:52px;background:#e6e6e6"></div>
<div style="left:1243.0px;top:177.5px;width:1px;height:52px;background:#e6e6e6"></div>
<div style="left:1289.9px;top:177.5px;width:1px;height:52px;background:#e6e6e6"></div>
<div style="left:1336.2px;top:177.5px;width:1px;height:52px;background:#e6e6e6"></div>
<div style="left:38px;top:204.0px;width:7px;height:1px;background:#777"></div>
<svg style="left:52px;top:181.0px;" width="42" height="46" viewBox="0 0 42 46"><rect x="1" y="0.5" width="39.5" height="44" fill="none" stroke="#555" stroke-width="0.9"/><g stroke="#19e6ee" stroke-width="1.1"><line x1="1" y1="2.3" x2="40.5" y2="2.3"/><line x1="1" y1="33.5" x2="40.5" y2="33.5"/><line x1="1" y1="38" x2="40.5" y2="38"/><line x1="1" y1="42.5" x2="40.5" y2="42.5"/></g><g fill="#222"><rect x="18" y="1" width="4" height="1"/><rect x="18" y="37" width="4" height="1"/><rect x="18" y="41.6" width="4" height="1"/></g></svg>
<div style="left:49.3px;top:213.1px;width:14.4px;height:14.6px;border:1px solid #d8d8d8;box-sizing:border-box;background:#fff"></div>
<svg style="left:53.5px;top:216.5px;" width="6" height="9" viewBox="0 0 6 9"><path d="M0.5 2.8 L3 0.3 L5.5 2.8 Z M0.5 5.6 L3 8.1 L5.5 5.6 Z" fill="#555"/></svg>
<div style="left:104px;top:184.0px;width:749px;height:14.6px;background:#43567f;border-top:1px solid #31436f;border-bottom:1px solid #34426f;box-sizing:border-box"></div>
<div style="left:178.5px;width:600px;text-align:center;top:188.00px;font-size:8.87px;line-height:8.87px;color:#fff;font-weight:bold;font-style:normal;white-space:pre;transform:scaleX(0.9804);transform-origin:50% 0;">TCCurved Door Outer Panel</div>
<div style="left:104px;top:207.5px;width:724.5px;height:16.3px;border:1px solid #dcdcdc;box-sizing:border-box;background:#fff"></div>
<div style="left:830.5px;top:204.2px;width:22px;height:22.2px;border:1px solid #e2e2e2;box-sizing:border-box;background:#fff"></div>
<svg style="left:834px;top:208.0px;" width="16" height="16" viewBox="0 0 16 16"><rect x="0.7" y="0.7" width="14.4" height="14.4" fill="#fff" stroke="#66728c" stroke-width="1.3"/><g stroke="#8a94a8" stroke-width="1"><line x1="2.5" y1="3" x2="13" y2="3"/><line x1="2.5" y1="5.3" x2="12" y2="5.3"/></g><line x1="2.5" y1="7.7" x2="8.5" y2="7.7" stroke="#4f5a72" stroke-width="1.1"/><line x1="8" y1="12.5" x2="13" y2="7.8" stroke="#3d4a66" stroke-width="1.8" stroke-linecap="round"/></svg>
<div style="left:860.4px;top:196.0px;width:67.4px;height:16.5px;border:1px solid #e0e0e0;box-sizing:border-box;background:#fff"></div>
<div style="left:863px;top:201.00px;font-size:9.34px;line-height:9.34px;color:#111;font-weight:normal;font-style:normal;white-space:pre;transform:scaleX(0.9259);transform-origin:0 0;">Mild Steel  2mm</div>
<div style="left:939.5px;width:40px;text-align:center;top:200.00px;font-size:9.61px;line-height:9.61px;color:#222;font-weight:normal;font-style:normal;white-space:pre;transform:scaleX(0.9259);transform-origin:50% 0;">1</div>
<div style="left:998.6px;width:40px;text-align:center;top:200.00px;font-size:9.61px;line-height:9.61px;color:#b8b8b8;font-weight:normal;font-style:normal;white-space:pre;transform:scaleX(0.9259);transform-origin:50% 0;">1</div>
<svg style="left:1056.5px;top:198.0px;overflow:visible" width="14.5" height="14" viewBox="0 0 14.5 14"><svg viewBox="0 0 30 28" width="14.5" height="14" preserveAspectRatio="none"><clipPath id="mc2"><rect x="0" y="16.4" width="30" height="12"/></clipPath><g fill="#42a0f4"><path d="M0.3 9.5 L12.8 0.3 H29.7 V3.4 L23.2 10 H0.3 Z"/><path d="M0.3 11.4 H23.6 L29.7 5.2 V8.6 L22.6 15.4 H0.3 Z"/><path d="M11.8 27 L22.6 16.4 L29.7 9.9 V17.6 L19.8 27 Z"/></g><line x1="3.7" y1="24.6" x2="16.5" y2="14.5" stroke="#42a0f4" stroke-width="5.2" stroke-linecap="round" clip-path="url(#mc2)"/></svg></svg>
<svg style="left:1084px;top:197.5px;overflow:visible" width="18.5" height="13" viewBox="0 0 18.5 13"><svg viewBox="0 0 38 24" width="18.5" height="13" preserveAspectRatio="none"><rect x="17.8" y="0" width="2.6" height="11.5" fill="#42a0f4"/><path d="M7.5 11 H29.5 L37.6 23.8 H0.4 Z" fill="#42a0f4"/><path d="M4 17.2 H13.5 M15.5 19.5 L19 14 L22.5 19.5" fill="none" stroke="#cfe6fb" stroke-width="0.9"/></svg></svg>
<div style="left:1164.4px;width:44px;text-align:center;top:200.00px;font-size:9.61px;line-height:9.61px;color:#222;font-weight:normal;font-style:normal;white-space:pre;transform:scaleX(0.9259);transform-origin:50% 0;">£28.28</div>
<div style="left:1209.2px;width:34px;text-align:center;top:200.00px;font-size:9.61px;line-height:9.61px;color:#222;font-weight:normal;font-style:normal;white-space:pre;transform:scaleX(0.9259);transform-origin:50% 0;">£28.28</div>
<div style="left:1244px;width:44px;text-align:right;top:200.00px;font-size:9.61px;line-height:9.61px;color:#222;font-weight:normal;font-style:normal;white-space:pre;transform:scaleX(0.9259);transform-origin:100% 0;">1min 34s</div>
<div style="left:1291px;width:44px;text-align:right;top:200.00px;font-size:9.61px;line-height:9.61px;color:#222;font-weight:normal;font-style:italic;white-space:pre;transform:scaleX(0.9259);transform-origin:100% 0;">1min 34s</div>
<div style="left:1294px;top:196.0px;width:1.2px;height:13.8px;background:#dcf3fb"></div>
<div style="left:1340px;top:178.0px;width:13.5px;height:51.5px;border:1px dotted #444;box-sizing:border-box"></div>
<div style="left:1342px;top:203.5px;width:8px;height:1.5px;background:#2f4270"></div>
<div style="left:1.5px;top:458.8px;width:1353px;height:1.5px;background:#e4e4e4"></div>
<div style="left:99.0px;top:407.5px;width:1px;height:52px;background:#e6e6e6"></div>
<div style="left:855.0px;top:407.5px;width:1px;height:52px;background:#e6e6e6"></div>
<div style="left:929.0px;top:407.5px;width:1px;height:52px;background:#e6e6e6"></div>
<div style="left:988.2px;top:407.5px;width:1px;height:52px;background:#e6e6e6"></div>
<div style="left:1048.1px;top:407.5px;width:1px;height:52px;background:#e6e6e6"></div>
<div style="left:1163.5px;top:407.5px;width:1px;height:52px;background:#e6e6e6"></div>
<div style="left:1208.1px;top:407.5px;width:1px;height:52px;background:#e6e6e6"></div>
<div style="left:1243.0px;top:407.5px;width:1px;height:52px;background:#e6e6e6"></div>
<div style="left:1289.9px;top:407.5px;width:1px;height:52px;background:#e6e6e6"></div>
<div style="left:1336.2px;top:407.5px;width:1px;height:52px;background:#e6e6e6"></div>
<div style="left:38px;top:434.0px;width:7px;height:1px;background:#777"></div>
<svg style="left:51px;top:431.5px;" width="46" height="5" viewBox="0 0 46 5"><rect x="1.5" y="1" width="41" height="2.8" fill="#f4f4f4" stroke="#888" stroke-width="0.6"/><line x1="2" y1="3.3" x2="42" y2="3.3" stroke="#bbb" stroke-width="1"/><rect x="1.2" y="0.8" width="1.2" height="3" fill="#19e6ee"/><rect x="41.5" y="0.8" width="1.2" height="3" fill="#19e6ee"/><rect x="2.5" y="1.5" width="2" height="1.2" fill="#222"/><rect x="43" y="1.5" width="2.5" height="1.2" fill="#222"/></svg>
<div style="left:49.3px;top:443.1px;width:14.4px;height:14.6px;border:1px solid #d8d8d8;box-sizing:border-box;background:#fff"></div>
<svg style="left:53.5px;top:446.5px;" width="6" height="9" viewBox="0 0 6 9"><path d="M0.5 2.8 L3 0.3 L5.5 2.8 Z M0.5 5.6 L3 8.1 L5.5 5.6 Z" fill="#555"/></svg>
<div style="left:104px;top:414.0px;width:749px;height:14.6px;background:#43567f;border-top:1px solid #31436f;border-bottom:1px solid #34426f;box-sizing:border-box"></div>
<div style="left:178.5px;width:600px;text-align:center;top:418.00px;font-size:8.87px;line-height:8.87px;color:#fff;font-weight:bold;font-style:normal;white-space:pre;transform:scaleX(0.9804);transform-origin:50% 0;">TCDrawerRunner</div>
<div style="left:104px;top:437.5px;width:724.5px;height:16.3px;border:1px solid #dcdcdc;box-sizing:border-box;background:#fff"></div>
<div style="left:830.5px;top:434.2px;width:22px;height:22.2px;border:1px solid #e2e2e2;box-sizing:border-box;background:#fff"></div>
<svg style="left:834px;top:438.0px;" width="16" height="16" viewBox="0 0 16 16"><rect x="0.7" y="0.7" width="14.4" height="14.4" fill="#fff" stroke="#66728c" stroke-width="1.3"/><g stroke="#8a94a8" stroke-width="1"><line x1="2.5" y1="3" x2="13" y2="3"/><line x1="2.5" y1="5.3" x2="12" y2="5.3"/></g><line x1="2.5" y1="7.7" x2="8.5" y2="7.7" stroke="#4f5a72" stroke-width="1.1"/><line x1="8" y1="12.5" x2="13" y2="7.8" stroke="#3d4a66" stroke-width="1.8" stroke-linecap="round"/></svg>
<div style="left:860.4px;top:426.0px;width:67.4px;height:16.5px;border:1px solid #e0e0e0;box-sizing:border-box;background:#fff"></div>
<div style="left:863px;top:431.00px;font-size:9.34px;line-height:9.34px;color:#111;font-weight:normal;font-style:normal;white-space:pre;transform:scaleX(0.9259);transform-origin:0 0;">Mild Steel  2mm</div>
<div style="left:939.5px;width:40px;text-align:center;top:430.00px;font-size:9.61px;line-height:9.61px;color:#222;font-weight:normal;font-style:normal;white-space:pre;transform:scaleX(0.9259);transform-origin:50% 0;">8</div>
<div style="left:998.6px;width:40px;text-align:center;top:430.00px;font-size:9.61px;line-height:9.61px;color:#b8b8b8;font-weight:normal;font-style:normal;white-space:pre;transform:scaleX(0.9259);transform-origin:50% 0;">8</div>
<svg style="left:1056.5px;top:428.0px;overflow:visible" width="14.5" height="14" viewBox="0 0 14.5 14"><svg viewBox="0 0 30 28" width="14.5" height="14" preserveAspectRatio="none"><clipPath id="mc3"><rect x="0" y="16.4" width="30" height="12"/></clipPath><g fill="#42a0f4"><path d="M0.3 9.5 L12.8 0.3 H29.7 V3.4 L23.2 10 H0.3 Z"/><path d="M0.3 11.4 H23.6 L29.7 5.2 V8.6 L22.6 15.4 H0.3 Z"/><path d="M11.8 27 L22.6 16.4 L29.7 9.9 V17.6 L19.8 27 Z"/></g><line x1="3.7" y1="24.6" x2="16.5" y2="14.5" stroke="#42a0f4" stroke-width="5.2" stroke-linecap="round" clip-path="url(#mc3)"/></svg></svg>
<svg style="left:1084px;top:427.5px;overflow:visible" width="18.5" height="13" viewBox="0 0 18.5 13"><svg viewBox="0 0 38 24" width="18.5" height="13" preserveAspectRatio="none"><rect x="17.8" y="0" width="2.6" height="11.5" fill="#42a0f4"/><path d="M7.5 11 H29.5 L37.6 23.8 H0.4 Z" fill="#42a0f4"/><path d="M4 17.2 H13.5 M15.5 19.5 L19 14 L22.5 19.5" fill="none" stroke="#cfe6fb" stroke-width="0.9"/></svg></svg>
<div style="left:1164.4px;width:44px;text-align:center;top:430.00px;font-size:9.61px;line-height:9.61px;color:#222;font-weight:normal;font-style:normal;white-space:pre;transform:scaleX(0.9259);transform-origin:50% 0;">£4.39</div>
<div style="left:1209.2px;width:34px;text-align:center;top:430.00px;font-size:9.61px;line-height:9.61px;color:#222;font-weight:normal;font-style:normal;white-space:pre;transform:scaleX(0.9259);transform-origin:50% 0;">£35.12</div>
<div style="left:1244px;width:44px;text-align:right;top:430.00px;font-size:9.61px;line-height:9.61px;color:#222;font-weight:normal;font-style:normal;white-space:pre;transform:scaleX(0.9259);transform-origin:100% 0;">23s</div>
<div style="left:1291px;width:44px;text-align:right;top:430.00px;font-size:9.61px;line-height:9.61px;color:#222;font-weight:normal;font-style:italic;white-space:pre;transform:scaleX(0.9259);transform-origin:100% 0;">3min 7s</div>
<div style="left:1294px;top:426.0px;width:2.2px;height:13.8px;background:#bfe9f9"></div>
<div style="left:1210.2px;top:426.0px;width:2px;height:13.8px;background:#c6efc6"></div>
<div style="left:1339.4px;width:14px;text-align:center;top:429.00px;font-size:11.88px;line-height:11.88px;color:#555;font-weight:normal;font-style:normal;white-space:pre;transform:scaleX(0.9259);transform-origin:50% 0;-webkit-text-stroke:0.3px #555;">+</div>
<div style="left:1.5px;top:510.8px;width:1353px;height:1.5px;background:#e4e4e4"></div>
<div style="left:99.0px;top:459.5px;width:1px;height:52px;background:#e6e6e6"></div>
<div style="left:855.0px;top:459.5px;width:1px;height:52px;background:#e6e6e6"></div>
<div style="left:929.0px;top:459.5px;width:1px;height:52px;background:#e6e6e6"></div>
<div style="left:988.2px;top:459.5px;width:1px;height:52px;background:#e6e6e6"></div>
<div style="left:1048.1px;top:459.5px;width:1px;height:52px;background:#e6e6e6"></div>
<div style="left:1163.5px;top:459.5px;width:1px;height:52px;background:#e6e6e6"></div>
<div style="left:1208.1px;top:459.5px;width:1px;height:52px;background:#e6e6e6"></div>
<div style="left:1243.0px;top:459.5px;width:1px;height:52px;background:#e6e6e6"></div>
<div style="left:1289.9px;top:459.5px;width:1px;height:52px;background:#e6e6e6"></div>
<div style="left:1336.2px;top:459.5px;width:1px;height:52px;background:#e6e6e6"></div>
<div style="left:38px;top:486.0px;width:7px;height:1px;background:#777"></div>
<svg style="left:51px;top:481.5px;" width="46" height="10" viewBox="0 0 46 10"><path d="M3 1 H39.5 L41 2.5 V7 L39.5 8.5 H3 L1.5 7 V2.5 Z" fill="#fff" stroke="#555" stroke-width="0.8"/><g stroke="#19e6ee" stroke-width="1"><line x1="3" y1="2.6" x2="39.5" y2="2.6"/><line x1="3" y1="6.8" x2="39.5" y2="6.8"/></g><g fill="#222"><rect x="20" y="1.6" width="3" height="1"/><rect x="20" y="5.8" width="3" height="1"/><rect x="3" y="4" width="3" height="1"/><rect x="42" y="4" width="3" height="1"/></g></svg>
<div style="left:49.3px;top:495.1px;width:14.4px;height:14.6px;border:1px solid #d8d8d8;box-sizing:border-box;background:#fff"></div>
<svg style="left:53.5px;top:498.5px;" width="6" height="9" viewBox="0 0 6 9"><path d="M0.5 2.8 L3 0.3 L5.5 2.8 Z M0.5 5.6 L3 8.1 L5.5 5.6 Z" fill="#555"/></svg>
<div style="left:104px;top:466.0px;width:749px;height:14.6px;background:#43567f;border-top:1px solid #31436f;border-bottom:1px solid #34426f;box-sizing:border-box"></div>
<div style="left:178.5px;width:600px;text-align:center;top:470.00px;font-size:8.87px;line-height:8.87px;color:#fff;font-weight:bold;font-style:normal;white-space:pre;transform:scaleX(0.9804);transform-origin:50% 0;">TCDrawerSupportPost</div>
<div style="left:104px;top:489.5px;width:724.5px;height:16.3px;border:1px solid #dcdcdc;box-sizing:border-box;background:#fff"></div>
<div style="left:830.5px;top:486.2px;width:22px;height:22.2px;border:1px solid #e2e2e2;box-sizing:border-box;background:#fff"></div>
<svg style="left:834px;top:490.0px;" width="16" height="16" viewBox="0 0 16 16"><rect x="0.7" y="0.7" width="14.4" height="14.4" fill="#fff" stroke="#66728c" stroke-width="1.3"/><g stroke="#8a94a8" stroke-width="1"><line x1="2.5" y1="3" x2="13" y2="3"/><line x1="2.5" y1="5.3" x2="12" y2="5.3"/></g><line x1="2.5" y1="7.7" x2="8.5" y2="7.7" stroke="#4f5a72" stroke-width="1.1"/><line x1="8" y1="12.5" x2="13" y2="7.8" stroke="#3d4a66" stroke-width="1.8" stroke-linecap="round"/></svg>
<div style="left:860.4px;top:478.0px;width:67.4px;height:16.5px;border:1px solid #e0e0e0;box-sizing:border-box;background:#fff"></div>
<div style="left:863px;top:483.00px;font-size:9.34px;line-height:9.34px;color:#111;font-weight:normal;font-style:normal;white-space:pre;transform:scaleX(0.9259);transform-origin:0 0;">Mild Steel  2mm</div>
<div style="left:939.5px;width:40px;text-align:center;top:482.00px;font-size:9.61px;line-height:9.61px;color:#222;font-weight:normal;font-style:normal;white-space:pre;transform:scaleX(0.9259);transform-origin:50% 0;">2</div>
<div style="left:998.6px;width:40px;text-align:center;top:482.00px;font-size:9.61px;line-height:9.61px;color:#b8b8b8;font-weight:normal;font-style:normal;white-space:pre;transform:scaleX(0.9259);transform-origin:50% 0;">2</div>
<svg style="left:1056.5px;top:480.0px;overflow:visible" width="14.5" height="14" viewBox="0 0 14.5 14"><svg viewBox="0 0 30 28" width="14.5" height="14" preserveAspectRatio="none"><clipPath id="mc4"><rect x="0" y="16.4" width="30" height="12"/></clipPath><g fill="#42a0f4"><path d="M0.3 9.5 L12.8 0.3 H29.7 V3.4 L23.2 10 H0.3 Z"/><path d="M0.3 11.4 H23.6 L29.7 5.2 V8.6 L22.6 15.4 H0.3 Z"/><path d="M11.8 27 L22.6 16.4 L29.7 9.9 V17.6 L19.8 27 Z"/></g><line x1="3.7" y1="24.6" x2="16.5" y2="14.5" stroke="#42a0f4" stroke-width="5.2" stroke-linecap="round" clip-path="url(#mc4)"/></svg></svg>
<svg style="left:1084px;top:479.5px;overflow:visible" width="18.5" height="13" viewBox="0 0 18.5 13"><svg viewBox="0 0 38 24" width="18.5" height="13" preserveAspectRatio="none"><rect x="17.8" y="0" width="2.6" height="11.5" fill="#42a0f4"/><path d="M7.5 11 H29.5 L37.6 23.8 H0.4 Z" fill="#42a0f4"/><path d="M4 17.2 H13.5 M15.5 19.5 L19 14 L22.5 19.5" fill="none" stroke="#cfe6fb" stroke-width="0.9"/></svg></svg>
<div style="left:1164.4px;width:44px;text-align:center;top:482.00px;font-size:9.61px;line-height:9.61px;color:#222;font-weight:normal;font-style:normal;white-space:pre;transform:scaleX(0.9259);transform-origin:50% 0;">£6.33</div>
<div style="left:1209.2px;width:34px;text-align:center;top:482.00px;font-size:9.61px;line-height:9.61px;color:#222;font-weight:normal;font-style:normal;white-space:pre;transform:scaleX(0.9259);transform-origin:50% 0;">£12.66</div>
<div style="left:1244px;width:44px;text-align:right;top:482.00px;font-size:9.61px;line-height:9.61px;color:#222;font-weight:normal;font-style:normal;white-space:pre;transform:scaleX(0.9259);transform-origin:100% 0;">30s</div>
<div style="left:1291px;width:44px;text-align:right;top:482.00px;font-size:9.61px;line-height:9.61px;color:#222;font-weight:normal;font-style:italic;white-space:pre;transform:scaleX(0.9259);transform-origin:100% 0;">1min 0s</div>
<div style="left:1294px;top:478.0px;width:1.4px;height:13.8px;background:#bfe9f9"></div>
<div style="left:1210.2px;top:478.0px;width:1.4px;height:13.8px;background:#c6efc6"></div>
<div style="left:1339.4px;width:14px;text-align:center;top:481.00px;font-size:11.88px;line-height:11.88px;color:#555;font-weight:normal;font-style:normal;white-space:pre;transform:scaleX(0.9259);transform-origin:50% 0;-webkit-text-stroke:0.3px #555;">+</div>
<div style="left:1.5px;top:562.8px;width:1353px;height:1.5px;background:#e4e4e4"></div>
<div style="left:99.0px;top:511.5px;width:1px;height:52px;background:#e6e6e6"></div>
<div style="left:855.0px;top:511.5px;width:1px;height:52px;background:#e6e6e6"></div>
<div style="left:929.0px;top:511.5px;width:1px;height:52px;background:#e6e6e6"></div>
<div style="left:988.2px;top:511.5px;width:1px;height:52px;background:#e6e6e6"></div>
<div style="left:1048.1px;top:511.5px;width:1px;height:52px;background:#e6e6e6"></div>
<div style="left:1163.5px;top:511.5px;width:1px;height:52px;background:#e6e6e6"></div>
<div style="left:1208.1px;top:511.5px;width:1px;height:52px;background:#e6e6e6"></div>
<div style="left:1243.0px;top:511.5px;width:1px;height:52px;background:#e6e6e6"></div>
<div style="left:1289.9px;top:511.5px;width:1px;height:52px;background:#e6e6e6"></div>
<div style="left:1336.2px;top:511.5px;width:1px;height:52px;background:#e6e6e6"></div>
<div style="left:38px;top:538.0px;width:7px;height:1px;background:#777"></div>
<svg style="left:51px;top:516.5px;" width="42" height="45" viewBox="0 0 42 45"><rect x="1.5" y="0.6" width="38" height="43.5" rx="1.5" fill="none" stroke="#555" stroke-width="0.9"/><g stroke="#19e6ee" stroke-width="1.1"><line x1="2" y1="1.3" x2="2" y2="43"/><line x1="2" y1="33.5" x2="39" y2="33.5"/><line x1="2" y1="42.3" x2="39" y2="42.3"/><line x1="2" y1="1.3" x2="39" y2="1.3"/></g><g fill="#222"><rect x="18" y="0.6" width="3" height="1"/><rect x="4" y="21" width="3" height="1"/><rect x="38" y="21" width="3" height="1"/><rect x="18" y="32.6" width="3" height="1"/><rect x="38" y="37" width="3" height="1"/></g></svg>
<div style="left:49.3px;top:547.1px;width:14.4px;height:14.6px;border:1px solid #d8d8d8;box-sizing:border-box;background:#fff"></div>
<svg style="left:53.5px;top:550.5px;" width="6" height="9" viewBox="0 0 6 9"><path d="M0.5 2.8 L3 0.3 L5.5 2.8 Z M0.5 5.6 L3 8.1 L5.5 5.6 Z" fill="#555"/></svg>
<div style="left:104px;top:518.0px;width:749px;height:14.6px;background:#43567f;border-top:1px solid #31436f;border-bottom:1px solid #34426f;box-sizing:border-box"></div>
<div style="left:178.5px;width:600px;text-align:center;top:522.00px;font-size:8.87px;line-height:8.87px;color:#fff;font-weight:bold;font-style:normal;white-space:pre;transform:scaleX(0.9804);transform-origin:50% 0;">TCEndPanel</div>
<div style="left:104px;top:541.5px;width:724.5px;height:16.3px;border:1px solid #dcdcdc;box-sizing:border-box;background:#fff"></div>
<div style="left:830.5px;top:538.2px;width:22px;height:22.2px;border:1px solid #e2e2e2;box-sizing:border-box;background:#fff"></div>
<svg style="left:834px;top:542.0px;" width="16" height="16" viewBox="0 0 16 16"><rect x="0.7" y="0.7" width="14.4" height="14.4" fill="#fff" stroke="#66728c" stroke-width="1.3"/><g stroke="#8a94a8" stroke-width="1"><line x1="2.5" y1="3" x2="13" y2="3"/><line x1="2.5" y1="5.3" x2="12" y2="5.3"/></g><line x1="2.5" y1="7.7" x2="8.5" y2="7.7" stroke="#4f5a72" stroke-width="1.1"/><line x1="8" y1="12.5" x2="13" y2="7.8" stroke="#3d4a66" stroke-width="1.8" stroke-linecap="round"/></svg>
<div style="left:860.4px;top:530.0px;width:67.4px;height:16.5px;border:1px solid #e0e0e0;box-sizing:border-box;background:#fff"></div>
<div style="left:863px;top:535.00px;font-size:9.34px;line-height:9.34px;color:#111;font-weight:normal;font-style:normal;white-space:pre;transform:scaleX(0.9259);transform-origin:0 0;">Mild Steel  2mm</div>
<div style="left:939.5px;width:40px;text-align:center;top:534.00px;font-size:9.61px;line-height:9.61px;color:#222;font-weight:normal;font-style:normal;white-space:pre;transform:scaleX(0.9259);transform-origin:50% 0;">2</div>
<div style="left:998.6px;width:40px;text-align:center;top:534.00px;font-size:9.61px;line-height:9.61px;color:#b8b8b8;font-weight:normal;font-style:normal;white-space:pre;transform:scaleX(0.9259);transform-origin:50% 0;">2</div>
<svg style="left:1056.5px;top:532.0px;overflow:visible" width="14.5" height="14" viewBox="0 0 14.5 14"><svg viewBox="0 0 30 28" width="14.5" height="14" preserveAspectRatio="none"><clipPath id="mc5"><rect x="0" y="16.4" width="30" height="12"/></clipPath><g fill="#42a0f4"><path d="M0.3 9.5 L12.8 0.3 H29.7 V3.4 L23.2 10 H0.3 Z"/><path d="M0.3 11.4 H23.6 L29.7 5.2 V8.6 L22.6 15.4 H0.3 Z"/><path d="M11.8 27 L22.6 16.4 L29.7 9.9 V17.6 L19.8 27 Z"/></g><line x1="3.7" y1="24.6" x2="16.5" y2="14.5" stroke="#42a0f4" stroke-width="5.2" stroke-linecap="round" clip-path="url(#mc5)"/></svg></svg>
<svg style="left:1084px;top:531.5px;overflow:visible" width="18.5" height="13" viewBox="0 0 18.5 13"><svg viewBox="0 0 38 24" width="18.5" height="13" preserveAspectRatio="none"><rect x="17.8" y="0" width="2.6" height="11.5" fill="#42a0f4"/><path d="M7.5 11 H29.5 L37.6 23.8 H0.4 Z" fill="#42a0f4"/><path d="M4 17.2 H13.5 M15.5 19.5 L19 14 L22.5 19.5" fill="none" stroke="#cfe6fb" stroke-width="0.9"/></svg></svg>
<div style="left:1164.4px;width:44px;text-align:center;top:534.00px;font-size:9.61px;line-height:9.61px;color:#222;font-weight:normal;font-style:normal;white-space:pre;transform:scaleX(0.9259);transform-origin:50% 0;">£27.06</div>
<div style="left:1209.2px;width:34px;text-align:center;top:534.00px;font-size:9.61px;line-height:9.61px;color:#222;font-weight:normal;font-style:normal;white-space:pre;transform:scaleX(0.9259);transform-origin:50% 0;">£54.12</div>
<div style="left:1244px;width:44px;text-align:right;top:534.00px;font-size:9.61px;line-height:9.61px;color:#222;font-weight:normal;font-style:normal;white-space:pre;transform:scaleX(0.9259);transform-origin:100% 0;">1min 12s</div>
<div style="left:1291px;width:44px;text-align:right;top:534.00px;font-size:9.61px;line-height:9.61px;color:#222;font-weight:normal;font-style:italic;white-space:pre;transform:scaleX(0.9259);transform-origin:100% 0;">2min 24s</div>
<div style="left:1294px;top:530.0px;width:2.2px;height:13.8px;background:#bfe9f9"></div>
<div style="left:1210.2px;top:530.0px;width:2px;height:13.8px;background:#c6efc6"></div>
<div style="left:1339.4px;width:14px;text-align:center;top:533.00px;font-size:11.88px;line-height:11.88px;color:#555;font-weight:normal;font-style:normal;white-space:pre;transform:scaleX(0.9259);transform-origin:50% 0;-webkit-text-stroke:0.3px #555;">+</div>
<div style="left:1.5px;top:614.8px;width:1353px;height:1.5px;background:#e4e4e4"></div>
<div style="left:99.0px;top:563.5px;width:1px;height:52px;background:#e6e6e6"></div>
<div style="left:855.0px;top:563.5px;width:1px;height:52px;background:#e6e6e6"></div>
<div style="left:929.0px;top:563.5px;width:1px;height:52px;background:#e6e6e6"></div>
<div style="left:988.2px;top:563.5px;width:1px;height:52px;background:#e6e6e6"></div>
<div style="left:1048.1px;top:563.5px;width:1px;height:52px;background:#e6e6e6"></div>
<div style="left:1163.5px;top:563.5px;width:1px;height:52px;background:#e6e6e6"></div>
<div style="left:1208.1px;top:563.5px;width:1px;height:52px;background:#e6e6e6"></div>
<div style="left:1243.0px;top:563.5px;width:1px;height:52px;background:#e6e6e6"></div>
<div style="left:1289.9px;top:563.5px;width:1px;height:52px;background:#e6e6e6"></div>
<div style="left:1336.2px;top:563.5px;width:1px;height:52px;background:#e6e6e6"></div>
<div style="left:38px;top:590.0px;width:7px;height:1px;background:#777"></div>
<svg style="left:49px;top:576.5px;" width="48" height="25" viewBox="0 0 48 25"><path d="M12.5 2.5 Q12.5 0.8 15 0.8 H43.5 Q46 0.8 46 3.5 V10.5 Q46 14 42 14.5 L14.5 20.5" fill="none" stroke="#444" stroke-width="0.9"/><path d="M12.5 2.5 V13.2 L2.2 18.8" fill="none" stroke="#555" stroke-width="0.8" stroke-dasharray="1.6 1"/><line x1="12.5" y1="13.2" x2="46" y2="13.2" stroke="#19e6ee" stroke-width="0.9"/><text x="31.5" y="12.2" font-family="Liberation Sans" font-size="7.4" fill="#555">90.0</text></svg>
<div style="left:49.3px;top:599.1px;width:14.4px;height:14.6px;border:1px solid #d8d8d8;box-sizing:border-box;background:#fff"></div>
<svg style="left:53.5px;top:602.5px;" width="6" height="9" viewBox="0 0 6 9"><path d="M0.5 2.8 L3 0.3 L5.5 2.8 Z M0.5 5.6 L3 8.1 L5.5 5.6 Z" fill="#555"/></svg>
<div style="left:104px;top:570.0px;width:749px;height:14.6px;background:#43567f;border-top:1px solid #31436f;border-bottom:1px solid #34426f;box-sizing:border-box"></div>
<div style="left:178.5px;width:600px;text-align:center;top:574.00px;font-size:8.87px;line-height:8.87px;color:#fff;font-weight:bold;font-style:normal;white-space:pre;transform:scaleX(0.9804);transform-origin:50% 0;">TCFront Door Hinge</div>
<div style="left:104px;top:593.5px;width:724.5px;height:16.3px;border:1px solid #dcdcdc;box-sizing:border-box;background:#fff"></div>
<div style="left:830.5px;top:590.2px;width:22px;height:22.2px;border:1px solid #e2e2e2;box-sizing:border-box;background:#fff"></div>
<svg style="left:834px;top:594.0px;" width="16" height="16" viewBox="0 0 16 16"><rect x="0.7" y="0.7" width="14.4" height="14.4" fill="#fff" stroke="#66728c" stroke-width="1.3"/><g stroke="#8a94a8" stroke-width="1"><line x1="2.5" y1="3" x2="13" y2="3"/><line x1="2.5" y1="5.3" x2="12" y2="5.3"/></g><line x1="2.5" y1="7.7" x2="8.5" y2="7.7" stroke="#4f5a72" stroke-width="1.1"/><line x1="8" y1="12.5" x2="13" y2="7.8" stroke="#3d4a66" stroke-width="1.8" stroke-linecap="round"/></svg>
<div style="left:860.4px;top:582.0px;width:67.4px;height:16.5px;border:1px solid #e0e0e0;box-sizing:border-box;background:#fff"></div>
<div style="left:863px;top:587.00px;font-size:9.34px;line-height:9.34px;color:#111;font-weight:normal;font-style:normal;white-space:pre;transform:scaleX(0.9259);transform-origin:0 0;">Mild Steel  2mm</div>
<div style="left:939.5px;width:40px;text-align:center;top:586.00px;font-size:9.61px;line-height:9.61px;color:#222;font-weight:normal;font-style:normal;white-space:pre;transform:scaleX(0.9259);transform-origin:50% 0;">2</div>
<div style="left:998.6px;width:40px;text-align:center;top:586.00px;font-size:9.61px;line-height:9.61px;color:#b8b8b8;font-weight:normal;font-style:normal;white-space:pre;transform:scaleX(0.9259);transform-origin:50% 0;">2</div>
<svg style="left:1056.5px;top:584.0px;overflow:visible" width="14.5" height="14" viewBox="0 0 14.5 14"><svg viewBox="0 0 30 28" width="14.5" height="14" preserveAspectRatio="none"><clipPath id="mc6"><rect x="0" y="16.4" width="30" height="12"/></clipPath><g fill="#42a0f4"><path d="M0.3 9.5 L12.8 0.3 H29.7 V3.4 L23.2 10 H0.3 Z"/><path d="M0.3 11.4 H23.6 L29.7 5.2 V8.6 L22.6 15.4 H0.3 Z"/><path d="M11.8 27 L22.6 16.4 L29.7 9.9 V17.6 L19.8 27 Z"/></g><line x1="3.7" y1="24.6" x2="16.5" y2="14.5" stroke="#42a0f4" stroke-width="5.2" stroke-linecap="round" clip-path="url(#mc6)"/></svg></svg>
<svg style="left:1084px;top:583.5px;overflow:visible" width="18.5" height="13" viewBox="0 0 18.5 13"><svg viewBox="0 0 38 24" width="18.5" height="13" preserveAspectRatio="none"><rect x="17.8" y="0" width="2.6" height="11.5" fill="#42a0f4"/><path d="M7.5 11 H29.5 L37.6 23.8 H0.4 Z" fill="#42a0f4"/><path d="M4 17.2 H13.5 M15.5 19.5 L19 14 L22.5 19.5" fill="none" stroke="#cfe6fb" stroke-width="0.9"/></svg></svg>
<div style="left:1164.4px;width:44px;text-align:center;top:586.00px;font-size:9.61px;line-height:9.61px;color:#222;font-weight:normal;font-style:normal;white-space:pre;transform:scaleX(0.9259);transform-origin:50% 0;">£3.92</div>
<div style="left:1209.2px;width:34px;text-align:center;top:586.00px;font-size:9.61px;line-height:9.61px;color:#222;font-weight:normal;font-style:normal;white-space:pre;transform:scaleX(0.9259);transform-origin:50% 0;">£7.84</div>
<div style="left:1244px;width:44px;text-align:right;top:586.00px;font-size:9.61px;line-height:9.61px;color:#222;font-weight:normal;font-style:normal;white-space:pre;transform:scaleX(0.9259);transform-origin:100% 0;">41s</div>
<div style="left:1291px;width:44px;text-align:right;top:586.00px;font-size:9.61px;line-height:9.61px;color:#222;font-weight:normal;font-style:italic;white-space:pre;transform:scaleX(0.9259);transform-origin:100% 0;">1min 22s</div>
<div style="left:1294px;top:582.0px;width:1.2px;height:13.8px;background:#dcf3fb"></div>
<div style="left:1339.4px;width:14px;text-align:center;top:585.00px;font-size:11.88px;line-height:11.88px;color:#555;font-weight:normal;font-style:normal;white-space:pre;transform:scaleX(0.9259);transform-origin:50% 0;-webkit-text-stroke:0.3px #555;">+</div>
<div style="left:1.5px;top:666.8px;width:1353px;height:1.5px;background:#e4e4e4"></div>
<div style="left:99.0px;top:615.5px;width:1px;height:52px;background:#e6e6e6"></div>
<div style="left:855.0px;top:615.5px;width:1px;height:52px;background:#e6e6e6"></div>
<div style="left:929.0px;top:615.5px;width:1px;height:52px;background:#e6e6e6"></div>
<div style="left:988.2px;top:615.5px;width:1px;height:52px;background:#e6e6e6"></div>
<div style="left:1048.1px;top:615.5px;width:1px;height:52px;background:#e6e6e6"></div>
<div style="left:1163.5px;top:615.5px;width:1px;height:52px;background:#e6e6e6"></div>
<div style="left:1208.1px;top:615.5px;width:1px;height:52px;background:#e6e6e6"></div>
<div style="left:1243.0px;top:615.5px;width:1px;height:52px;background:#e6e6e6"></div>
<div style="left:1289.9px;top:615.5px;width:1px;height:52px;background:#e6e6e6"></div>
<div style="left:1336.2px;top:615.5px;width:1px;height:52px;background:#e6e6e6"></div>
<div style="left:38px;top:642.0px;width:7px;height:1px;background:#777"></div>
<svg style="left:50px;top:624.0px;" width="44" height="40" viewBox="0 0 44 40"><path d="M5 1 H37 L41.5 5.5 V32.5 L37.5 36.5 H5 L1.5 33 V5 Z" fill="none" stroke="#555" stroke-width="0.9"/><rect x="4.6" y="2.6" width="33.4" height="31.6" fill="none" stroke="#19e6ee" stroke-width="1.2"/><g fill="#222"><rect x="18" y="2" width="4" height="1.5"/><rect x="3" y="17.5" width="4" height="1.2"/><rect x="37" y="17.5" width="3" height="1.2"/><rect x="18" y="33.2" width="4" height="1.5"/></g></svg>
<div style="left:49.3px;top:651.1px;width:14.4px;height:14.6px;border:1px solid #d8d8d8;box-sizing:border-box;background:#fff"></div>
<svg style="left:53.5px;top:654.5px;" width="6" height="9" viewBox="0 0 6 9"><path d="M0.5 2.8 L3 0.3 L5.5 2.8 Z M0.5 5.6 L3 8.1 L5.5 5.6 Z" fill="#555"/></svg>
<div style="left:104px;top:622.0px;width:749px;height:14.6px;background:#43567f;border-top:1px solid #31436f;border-bottom:1px solid #34426f;box-sizing:border-box"></div>
<div style="left:178.5px;width:600px;text-align:center;top:626.00px;font-size:8.87px;line-height:8.87px;color:#fff;font-weight:bold;font-style:normal;white-space:pre;transform:scaleX(0.9804);transform-origin:50% 0;">TCFront Door Panel</div>
<div style="left:104px;top:645.5px;width:724.5px;height:16.3px;border:1px solid #dcdcdc;box-sizing:border-box;background:#fff"></div>
<div style="left:830.5px;top:642.2px;width:22px;height:22.2px;border:1px solid #e2e2e2;box-sizing:border-box;background:#fff"></div>
<svg style="left:834px;top:646.0px;" width="16" height="16" viewBox="0 0 16 16"><rect x="0.7" y="0.7" width="14.4" height="14.4" fill="#fff" stroke="#66728c" stroke-width="1.3"/><g stroke="#8a94a8" stroke-width="1"><line x1="2.5" y1="3" x2="13" y2="3"/><line x1="2.5" y1="5.3" x2="12" y2="5.3"/></g><line x1="2.5" y1="7.7" x2="8.5" y2="7.7" stroke="#4f5a72" stroke-width="1.1"/><line x1="8" y1="12.5" x2="13" y2="7.8" stroke="#3d4a66" stroke-width="1.8" stroke-linecap="round"/></svg>
<div style="left:860.4px;top:634.0px;width:67.4px;height:16.5px;border:1px solid #e0e0e0;box-sizing:border-box;background:#fff"></div>
<div style="left:863px;top:639.00px;font-size:9.34px;line-height:9.34px;color:#111;font-weight:normal;font-style:normal;white-space:pre;transform:scaleX(0.9259);transform-origin:0 0;">Mild Steel  2mm</div>
<div style="left:939.5px;width:40px;text-align:center;top:638.00px;font-size:9.61px;line-height:9.61px;color:#222;font-weight:normal;font-style:normal;white-space:pre;transform:scaleX(0.9259);transform-origin:50% 0;">1</div>
<div style="left:998.6px;width:40px;text-align:center;top:638.00px;font-size:9.61px;line-height:9.61px;color:#b8b8b8;font-weight:normal;font-style:normal;white-space:pre;transform:scaleX(0.9259);transform-origin:50% 0;">1</div>
<svg style="left:1056.5px;top:636.0px;overflow:visible" width="14.5" height="14" viewBox="0 0 14.5 14"><svg viewBox="0 0 30 28" width="14.5" height="14" preserveAspectRatio="none"><clipPath id="mc7"><rect x="0" y="16.4" width="30" height="12"/></clipPath><g fill="#42a0f4"><path d="M0.3 9.5 L12.8 0.3 H29.7 V3.4 L23.2 10 H0.3 Z"/><path d="M0.3 11.4 H23.6 L29.7 5.2 V8.6 L22.6 15.4 H0.3 Z"/><path d="M11.8 27 L22.6 16.4 L29.7 9.9 V17.6 L19.8 27 Z"/></g><line x1="3.7" y1="24.6" x2="16.5" y2="14.5" stroke="#42a0f4" stroke-width="5.2" stroke-linecap="round" clip-path="url(#mc7)"/></svg></svg>
<svg style="left:1084px;top:635.5px;overflow:visible" width="18.5" height="13" viewBox="0 0 18.5 13"><svg viewBox="0 0 38 24" width="18.5" height="13" preserveAspectRatio="none"><rect x="17.8" y="0" width="2.6" height="11.5" fill="#42a0f4"/><path d="M7.5 11 H29.5 L37.6 23.8 H0.4 Z" fill="#42a0f4"/><path d="M4 17.2 H13.5 M15.5 19.5 L19 14 L22.5 19.5" fill="none" stroke="#cfe6fb" stroke-width="0.9"/></svg></svg>
<div style="left:1164.4px;width:44px;text-align:center;top:638.00px;font-size:9.61px;line-height:9.61px;color:#222;font-weight:normal;font-style:normal;white-space:pre;transform:scaleX(0.9259);transform-origin:50% 0;">£23.53</div>
<div style="left:1209.2px;width:34px;text-align:center;top:638.00px;font-size:9.61px;line-height:9.61px;color:#222;font-weight:normal;font-style:normal;white-space:pre;transform:scaleX(0.9259);transform-origin:50% 0;">£23.53</div>
<div style="left:1244px;width:44px;text-align:right;top:638.00px;font-size:9.61px;line-height:9.61px;color:#222;font-weight:normal;font-style:normal;white-space:pre;transform:scaleX(0.9259);transform-origin:100% 0;">1min 14s</div>
<div style="left:1291px;width:44px;text-align:right;top:638.00px;font-size:9.61px;line-height:9.61px;color:#222;font-weight:normal;font-style:italic;white-space:pre;transform:scaleX(0.9259);transform-origin:100% 0;">1min 14s</div>
<div style="left:1294px;top:634.0px;width:1.2px;height:13.8px;background:#dcf3fb"></div>
<div style="left:1210.2px;top:634.0px;width:1.2px;height:13.8px;background:#c6efc6"></div>
<div style="left:1339.4px;width:14px;text-align:center;top:637.00px;font-size:11.88px;line-height:11.88px;color:#555;font-weight:normal;font-style:normal;white-space:pre;transform:scaleX(0.9259);transform-origin:50% 0;-webkit-text-stroke:0.3px #555;">+</div>
<div style="left:1.5px;top:718.8px;width:1353px;height:1.5px;background:#e4e4e4"></div>
<div style="left:99.0px;top:667.5px;width:1px;height:52px;background:#e6e6e6"></div>
<div style="left:855.0px;top:667.5px;width:1px;height:52px;background:#e6e6e6"></div>
<div style="left:929.0px;top:667.5px;width:1px;height:52px;background:#e6e6e6"></div>
<div style="left:988.2px;top:667.5px;width:1px;height:52px;background:#e6e6e6"></div>
<div style="left:1048.1px;top:667.5px;width:1px;height:52px;background:#e6e6e6"></div>
<div style="left:1163.5px;top:667.5px;width:1px;height:52px;background:#e6e6e6"></div>
<div style="left:1208.1px;top:667.5px;width:1px;height:52px;background:#e6e6e6"></div>
<div style="left:1243.0px;top:667.5px;width:1px;height:52px;background:#e6e6e6"></div>
<div style="left:1289.9px;top:667.5px;width:1px;height:52px;background:#e6e6e6"></div>
<div style="left:1336.2px;top:667.5px;width:1px;height:52px;background:#e6e6e6"></div>
<div style="left:38px;top:694.0px;width:7px;height:1px;background:#777"></div>
<svg style="left:51px;top:689.5px;" width="46" height="10" viewBox="0 0 46 10"><path d="M3 1 H39.5 L41 2.5 V7 L39.5 8.5 H3 L1.5 7 V2.5 Z" fill="#fff" stroke="#555" stroke-width="0.8"/><g stroke="#19e6ee" stroke-width="1"><line x1="3" y1="2.6" x2="39.5" y2="2.6"/><line x1="3" y1="6.8" x2="39.5" y2="6.8"/></g><g fill="#222"><rect x="20" y="1.6" width="3" height="1"/><rect x="20" y="5.8" width="3" height="1"/><rect x="3" y="4" width="3" height="1"/><rect x="42" y="4" width="3" height="1"/></g></svg>
<div style="left:49.3px;top:703.1px;width:14.4px;height:14.6px;border:1px solid #d8d8d8;box-sizing:border-box;background:#fff"></div>
<svg style="left:53.5px;top:706.5px;" width="6" height="9" viewBox="0 0 6 9"><path d="M0.5 2.8 L3 0.3 L5.5 2.8 Z M0.5 5.6 L3 8.1 L5.5 5.6 Z" fill="#555"/></svg>
<div style="left:104px;top:674.0px;width:749px;height:14.6px;background:#43567f;border-top:1px solid #31436f;border-bottom:1px solid #34426f;box-sizing:border-box"></div>
<div style="left:178.5px;width:600px;text-align:center;top:678.00px;font-size:8.87px;line-height:8.87px;color:#fff;font-weight:bold;font-style:normal;white-space:pre;transform:scaleX(0.9804);transform-origin:50% 0;">TCHard Ware Front</div>
<div style="left:104px;top:697.5px;width:724.5px;height:16.3px;border:1px solid #dcdcdc;box-sizing:border-box;background:#fff"></div>
<div style="left:830.5px;top:694.2px;width:22px;height:22.2px;border:1px solid #e2e2e2;box-sizing:border-box;background:#fff"></div>
<svg style="left:834px;top:698.0px;" width="16" height="16" viewBox="0 0 16 16"><rect x="0.7" y="0.7" width="14.4" height="14.4" fill="#fff" stroke="#66728c" stroke-width="1.3"/><g stroke="#8a94a8" stroke-width="1"><line x1="2.5" y1="3" x2="13" y2="3"/><line x1="2.5" y1="5.3" x2="12" y2="5.3"/></g><line x1="2.5" y1="7.7" x2="8.5" y2="7.7" stroke="#4f5a72" stroke-width="1.1"/><line x1="8" y1="12.5" x2="13" y2="7.8" stroke="#3d4a66" stroke-width="1.8" stroke-linecap="round"/></svg>
<div style="left:860.4px;top:686.0px;width:67.4px;height:16.5px;border:1px solid #e0e0e0;box-sizing:border-box;background:#fff"></div>
<div style="left:863px;top:691.00px;font-size:9.34px;line-height:9.34px;color:#111;font-weight:normal;font-style:normal;white-space:pre;transform:scaleX(0.9259);transform-origin:0 0;">Mild Steel  2mm</div>
<div style="left:939.5px;width:40px;text-align:center;top:690.00px;font-size:9.61px;line-height:9.61px;color:#222;font-weight:normal;font-style:normal;white-space:pre;transform:scaleX(0.9259);transform-origin:50% 0;">1</div>
<div style="left:998.6px;width:40px;text-align:center;top:690.00px;font-size:9.61px;line-height:9.61px;color:#b8b8b8;font-weight:normal;font-style:normal;white-space:pre;transform:scaleX(0.9259);transform-origin:50% 0;">1</div>
<svg style="left:1056.5px;top:688.0px;overflow:visible" width="14.5" height="14" viewBox="0 0 14.5 14"><svg viewBox="0 0 30 28" width="14.5" height="14" preserveAspectRatio="none"><clipPath id="mc8"><rect x="0" y="16.4" width="30" height="12"/></clipPath><g fill="#42a0f4"><path d="M0.3 9.5 L12.8 0.3 H29.7 V3.4 L23.2 10 H0.3 Z"/><path d="M0.3 11.4 H23.6 L29.7 5.2 V8.6 L22.6 15.4 H0.3 Z"/><path d="M11.8 27 L22.6 16.4 L29.7 9.9 V17.6 L19.8 27 Z"/></g><line x1="3.7" y1="24.6" x2="16.5" y2="14.5" stroke="#42a0f4" stroke-width="5.2" stroke-linecap="round" clip-path="url(#mc8)"/></svg></svg>
<svg style="left:1084px;top:687.5px;overflow:visible" width="18.5" height="13" viewBox="0 0 18.5 13"><svg viewBox="0 0 38 24" width="18.5" height="13" preserveAspectRatio="none"><rect x="17.8" y="0" width="2.6" height="11.5" fill="#42a0f4"/><path d="M7.5 11 H29.5 L37.6 23.8 H0.4 Z" fill="#42a0f4"/><path d="M4 17.2 H13.5 M15.5 19.5 L19 14 L22.5 19.5" fill="none" stroke="#cfe6fb" stroke-width="0.9"/></svg></svg>
<div style="left:1164.4px;width:44px;text-align:center;top:690.00px;font-size:9.61px;line-height:9.61px;color:#222;font-weight:normal;font-style:normal;white-space:pre;transform:scaleX(0.9259);transform-origin:50% 0;">£7.30</div>
<div style="left:1209.2px;width:34px;text-align:center;top:690.00px;font-size:9.61px;line-height:9.61px;color:#222;font-weight:normal;font-style:normal;white-space:pre;transform:scaleX(0.9259);transform-origin:50% 0;">£7.30</div>
<div style="left:1244px;width:44px;text-align:right;top:690.00px;font-size:9.61px;line-height:9.61px;color:#222;font-weight:normal;font-style:normal;white-space:pre;transform:scaleX(0.9259);transform-origin:100% 0;">30s</div>
<div style="left:1291px;width:44px;text-align:right;top:690.00px;font-size:9.61px;line-height:9.61px;color:#222;font-weight:normal;font-style:italic;white-space:pre;transform:scaleX(0.9259);transform-origin:100% 0;">30s</div>
<div style="left:1339.4px;width:14px;text-align:center;top:689.00px;font-size:11.88px;line-height:11.88px;color:#555;font-weight:normal;font-style:normal;white-space:pre;transform:scaleX(0.9259);transform-origin:50% 0;-webkit-text-stroke:0.3px #555;">+</div>
<div style="left:1.5px;top:770.8px;width:1353px;height:1.5px;background:#e4e4e4"></div>
<div style="left:99.0px;top:719.5px;width:1px;height:52px;background:#e6e6e6"></div>
<div style="left:855.0px;top:719.5px;width:1px;height:52px;background:#e6e6e6"></div>
<div style="left:929.0px;top:719.5px;width:1px;height:52px;background:#e6e6e6"></div>
<div style="left:988.2px;top:719.5px;width:1px;height:52px;background:#e6e6e6"></div>
<div style="left:1048.1px;top:719.5px;width:1px;height:52px;background:#e6e6e6"></div>
<div style="left:1163.5px;top:719.5px;width:1px;height:52px;background:#e6e6e6"></div>
<div style="left:1208.1px;top:719.5px;width:1px;height:52px;background:#e6e6e6"></div>
<div style="left:1243.0px;top:719.5px;width:1px;height:52px;background:#e6e6e6"></div>
<div style="left:1289.9px;top:719.5px;width:1px;height:52px;background:#e6e6e6"></div>
<div style="left:1336.2px;top:719.5px;width:1px;height:52px;background:#e6e6e6"></div>
<div style="left:38px;top:746.0px;width:7px;height:1px;background:#777"></div>
<svg style="left:50px;top:734.0px;" width="47" height="26" viewBox="0 0 47 26"><path d="M2 0.8 H17 A12 12 0 0 1 29 12.8 H44 L45 14 V22 L44 23 H13 V24.5" fill="none" stroke="#555" stroke-width="0.9"/><line x1="2.2" y1="0.8" x2="2.2" y2="23" stroke="#19e6ee" stroke-width="1.1"/><line x1="29" y1="13.8" x2="44" y2="13.8" stroke="#19e6ee" stroke-width="1"/><g fill="#222"><rect x="8" y="0.4" width="3" height="1"/><rect x="3.5" y="9" width="2.5" height="1"/><rect x="37" y="12.8" width="3" height="1"/><rect x="22" y="22.5" width="3" height="1"/></g></svg>
<div style="left:49.3px;top:755.1px;width:14.4px;height:14.6px;border:1px solid #d8d8d8;box-sizing:border-box;background:#fff"></div>
<svg style="left:53.5px;top:758.5px;" width="6" height="9" viewBox="0 0 6 9"><path d="M0.5 2.8 L3 0.3 L5.5 2.8 Z M0.5 5.6 L3 8.1 L5.5 5.6 Z" fill="#555"/></svg>
<div style="left:104px;top:726.0px;width:749px;height:14.6px;background:#43567f;border-top:1px solid #31436f;border-bottom:1px solid #34426f;box-sizing:border-box"></div>
<div style="left:178.5px;width:600px;text-align:center;top:730.00px;font-size:8.87px;line-height:8.87px;color:#fff;font-weight:bold;font-style:normal;white-space:pre;transform:scaleX(0.9804);transform-origin:50% 0;">TCHard Ware Store Left Side</div>
<div style="left:104px;top:749.5px;width:724.5px;height:16.3px;border:1px solid #dcdcdc;box-sizing:border-box;background:#fff"></div>
<div style="left:830.5px;top:746.2px;width:22px;height:22.2px;border:1px solid #e2e2e2;box-sizing:border-box;background:#fff"></div>
<svg style="left:834px;top:750.0px;" width="16" height="16" viewBox="0 0 16 16"><rect x="0.7" y="0.7" width="14.4" height="14.4" fill="#fff" stroke="#66728c" stroke-width="1.3"/><g stroke="#8a94a8" stroke-width="1"><line x1="2.5" y1="3" x2="13" y2="3"/><line x1="2.5" y1="5.3" x2="12" y2="5.3"/></g><line x1="2.5" y1="7.7" x2="8.5" y2="7.7" stroke="#4f5a72" stroke-width="1.1"/><line x1="8" y1="12.5" x2="13" y2="7.8" stroke="#3d4a66" stroke-width="1.8" stroke-linecap="round"/></svg>
<div style="left:860.4px;top:738.0px;width:67.4px;height:16.5px;border:1px solid #e0e0e0;box-sizing:border-box;background:#fff"></div>
<div style="left:863px;top:743.00px;font-size:9.34px;line-height:9.34px;color:#111;font-weight:normal;font-style:normal;white-space:pre;transform:scaleX(0.9259);transform-origin:0 0;">Mild Steel  2mm</div>
<div style="left:939.5px;width:40px;text-align:center;top:742.00px;font-size:9.61px;line-height:9.61px;color:#222;font-weight:normal;font-style:normal;white-space:pre;transform:scaleX(0.9259);transform-origin:50% 0;">1</div>
<div style="left:998.6px;width:40px;text-align:center;top:742.00px;font-size:9.61px;line-height:9.61px;color:#b8b8b8;font-weight:normal;font-style:normal;white-space:pre;transform:scaleX(0.9259);transform-origin:50% 0;">1</div>
<svg style="left:1056.5px;top:740.0px;overflow:visible" width="14.5" height="14" viewBox="0 0 14.5 14"><svg viewBox="0 0 30 28" width="14.5" height="14" preserveAspectRatio="none"><clipPath id="mc9"><rect x="0" y="16.4" width="30" height="12"/></clipPath><g fill="#42a0f4"><path d="M0.3 9.5 L12.8 0.3 H29.7 V3.4 L23.2 10 H0.3 Z"/><path d="M0.3 11.4 H23.6 L29.7 5.2 V8.6 L22.6 15.4 H0.3 Z"/><path d="M11.8 27 L22.6 16.4 L29.7 9.9 V17.6 L19.8 27 Z"/></g><line x1="3.7" y1="24.6" x2="16.5" y2="14.5" stroke="#42a0f4" stroke-width="5.2" stroke-linecap="round" clip-path="url(#mc9)"/></svg></svg>
<svg style="left:1084px;top:739.5px;overflow:visible" width="18.5" height="13" viewBox="0 0 18.5 13"><svg viewBox="0 0 38 24" width="18.5" height="13" preserveAspectRatio="none"><rect x="17.8" y="0" width="2.6" height="11.5" fill="#42a0f4"/><path d="M7.5 11 H29.5 L37.6 23.8 H0.4 Z" fill="#42a0f4"/><path d="M4 17.2 H13.5 M15.5 19.5 L19 14 L22.5 19.5" fill="none" stroke="#cfe6fb" stroke-width="0.9"/></svg></svg>
<div style="left:1164.4px;width:44px;text-align:center;top:742.00px;font-size:9.61px;line-height:9.61px;color:#222;font-weight:normal;font-style:normal;white-space:pre;transform:scaleX(0.9259);transform-origin:50% 0;">£12.32</div>
<div style="left:1209.2px;width:34px;text-align:center;top:742.00px;font-size:9.61px;line-height:9.61px;color:#222;font-weight:normal;font-style:normal;white-space:pre;transform:scaleX(0.9259);transform-origin:50% 0;">£12.32</div>
<div style="left:1244px;width:44px;text-align:right;top:742.00px;font-size:9.61px;line-height:9.61px;color:#222;font-weight:normal;font-style:normal;white-space:pre;transform:scaleX(0.9259);transform-origin:100% 0;">1min 35s</div>
<div style="left:1291px;width:44px;text-align:right;top:742.00px;font-size:9.61px;line-height:9.61px;color:#222;font-weight:normal;font-style:italic;white-space:pre;transform:scaleX(0.9259);transform-origin:100% 0;">1min 35s</div>
<div style="left:1294px;top:738.0px;width:1.4px;height:13.8px;background:#bfe9f9"></div>
<div style="left:1210.2px;top:738.0px;width:1.2px;height:13.8px;background:#c6efc6"></div>
<div style="left:1339.4px;width:14px;text-align:center;top:741.00px;font-size:11.88px;line-height:11.88px;color:#555;font-weight:normal;font-style:normal;white-space:pre;transform:scaleX(0.9259);transform-origin:50% 0;-webkit-text-stroke:0.3px #555;">+</div>
<div style="left:1.5px;top:822.8px;width:1353px;height:1.5px;background:#e4e4e4"></div>
<div style="left:99.0px;top:771.5px;width:1px;height:52px;background:#e6e6e6"></div>
<div style="left:855.0px;top:771.5px;width:1px;height:52px;background:#e6e6e6"></div>
<div style="left:929.0px;top:771.5px;width:1px;height:52px;background:#e6e6e6"></div>
<div style="left:988.2px;top:771.5px;width:1px;height:52px;background:#e6e6e6"></div>
<div style="left:1048.1px;top:771.5px;width:1px;height:52px;background:#e6e6e6"></div>
<div style="left:1163.5px;top:771.5px;width:1px;height:52px;background:#e6e6e6"></div>
<div style="left:1208.1px;top:771.5px;width:1px;height:52px;background:#e6e6e6"></div>
<div style="left:1243.0px;top:771.5px;width:1px;height:52px;background:#e6e6e6"></div>
<div style="left:1289.9px;top:771.5px;width:1px;height:52px;background:#e6e6e6"></div>
<div style="left:1336.2px;top:771.5px;width:1px;height:52px;background:#e6e6e6"></div>
<div style="left:38px;top:798.0px;width:7px;height:1px;background:#777"></div>
<svg style="left:51px;top:776.0px;" width="46" height="30" viewBox="0 0 46 30"><rect x="3.5" y="2" width="38" height="28" fill="none" stroke="#777" stroke-width="0.9"/><line x1="3.5" y1="23" x2="41.5" y2="23" stroke="#19e6ee" stroke-width="1"/><rect x="20" y="22" width="3" height="1.2" fill="#222"/></svg>
<div style="left:49.3px;top:807.1px;width:14.4px;height:14.6px;border:1px solid #d8d8d8;box-sizing:border-box;background:#fff"></div>
<svg style="left:53.5px;top:810.5px;" width="6" height="9" viewBox="0 0 6 9"><path d="M0.5 2.8 L3 0.3 L5.5 2.8 Z M0.5 5.6 L3 8.1 L5.5 5.6 Z" fill="#555"/></svg>
<div style="left:104px;top:778.0px;width:749px;height:14.6px;background:#43567f;border-top:1px solid #31436f;border-bottom:1px solid #34426f;box-sizing:border-box"></div>
<div style="left:178.5px;width:600px;text-align:center;top:782.00px;font-size:8.87px;line-height:8.87px;color:#fff;font-weight:bold;font-style:normal;white-space:pre;transform:scaleX(0.9804);transform-origin:50% 0;">TCHard Ware Store Rear Panel</div>
<div style="left:104px;top:801.5px;width:724.5px;height:16.3px;border:1px solid #dcdcdc;box-sizing:border-box;background:#fff"></div>
<div style="left:830.5px;top:798.2px;width:22px;height:22.2px;border:1px solid #e2e2e2;box-sizing:border-box;background:#fff"></div>
<svg style="left:834px;top:802.0px;" width="16" height="16" viewBox="0 0 16 16"><rect x="0.7" y="0.7" width="14.4" height="14.4" fill="#fff" stroke="#66728c" stroke-width="1.3"/><g stroke="#8a94a8" stroke-width="1"><line x1="2.5" y1="3" x2="13" y2="3"/><line x1="2.5" y1="5.3" x2="12" y2="5.3"/></g><line x1="2.5" y1="7.7" x2="8.5" y2="7.7" stroke="#4f5a72" stroke-width="1.1"/><line x1="8" y1="12.5" x2="13" y2="7.8" stroke="#3d4a66" stroke-width="1.8" stroke-linecap="round"/></svg>
<div style="left:860.4px;top:790.0px;width:67.4px;height:16.5px;border:1px solid #e0e0e0;box-sizing:border-box;background:#fff"></div>
<div style="left:863px;top:795.00px;font-size:9.34px;line-height:9.34px;color:#111;font-weight:normal;font-style:normal;white-space:pre;transform:scaleX(0.9259);transform-origin:0 0;">Mild Steel  2mm</div>
<div style="left:939.5px;width:40px;text-align:center;top:794.00px;font-size:9.61px;line-height:9.61px;color:#222;font-weight:normal;font-style:normal;white-space:pre;transform:scaleX(0.9259);transform-origin:50% 0;">1</div>
<div style="left:998.6px;width:40px;text-align:center;top:794.00px;font-size:9.61px;line-height:9.61px;color:#b8b8b8;font-weight:normal;font-style:normal;white-space:pre;transform:scaleX(0.9259);transform-origin:50% 0;">1</div>
<svg style="left:1056.5px;top:792.0px;overflow:visible" width="14.5" height="14" viewBox="0 0 14.5 14"><svg viewBox="0 0 30 28" width="14.5" height="14" preserveAspectRatio="none"><clipPath id="mc10"><rect x="0" y="16.4" width="30" height="12"/></clipPath><g fill="#42a0f4"><path d="M0.3 9.5 L12.8 0.3 H29.7 V3.4 L23.2 10 H0.3 Z"/><path d="M0.3 11.4 H23.6 L29.7 5.2 V8.6 L22.6 15.4 H0.3 Z"/><path d="M11.8 27 L22.6 16.4 L29.7 9.9 V17.6 L19.8 27 Z"/></g><line x1="3.7" y1="24.6" x2="16.5" y2="14.5" stroke="#42a0f4" stroke-width="5.2" stroke-linecap="round" clip-path="url(#mc10)"/></svg></svg>
<svg style="left:1084px;top:791.5px;overflow:visible" width="18.5" height="13" viewBox="0 0 18.5 13"><svg viewBox="0 0 38 24" width="18.5" height="13" preserveAspectRatio="none"><rect x="17.8" y="0" width="2.6" height="11.5" fill="#42a0f4"/><path d="M7.5 11 H29.5 L37.6 23.8 H0.4 Z" fill="#42a0f4"/><path d="M4 17.2 H13.5 M15.5 19.5 L19 14 L22.5 19.5" fill="none" stroke="#cfe6fb" stroke-width="0.9"/></svg></svg>
<div style="left:1164.4px;width:44px;text-align:center;top:794.00px;font-size:9.61px;line-height:9.61px;color:#222;font-weight:normal;font-style:normal;white-space:pre;transform:scaleX(0.9259);transform-origin:50% 0;">£2.39</div>
<div style="left:1209.2px;width:34px;text-align:center;top:794.00px;font-size:9.61px;line-height:9.61px;color:#222;font-weight:normal;font-style:normal;white-space:pre;transform:scaleX(0.9259);transform-origin:50% 0;">£2.39</div>
<div style="left:1244px;width:44px;text-align:right;top:794.00px;font-size:9.61px;line-height:9.61px;color:#222;font-weight:normal;font-style:normal;white-space:pre;transform:scaleX(0.9259);transform-origin:100% 0;">18s</div>
<div style="left:1291px;width:44px;text-align:right;top:794.00px;font-size:9.61px;line-height:9.61px;color:#222;font-weight:normal;font-style:italic;white-space:pre;transform:scaleX(0.9259);transform-origin:100% 0;">18s</div>
<div style="left:1339.4px;width:14px;text-align:center;top:793.00px;font-size:11.88px;line-height:11.88px;color:#555;font-weight:normal;font-style:normal;white-space:pre;transform:scaleX(0.9259);transform-origin:50% 0;-webkit-text-stroke:0.3px #555;">+</div>
<div style="left:37.1px;top:131.5px;width:1.8px;height:98px;background:#a9abd0"></div>
<div style="left:37.1px;top:407.5px;width:1.8px;height:395px;background:#a9abd0"></div>
<div style="left:1.5px;top:229.5px;width:2.5px;height:178px;background:#ececec"></div>
<div style="left:4px;top:229.5px;width:1350px;height:178px;background:#fff7de;border-bottom:1px solid #ece5cd;box-sizing:border-box"></div>
<div style="left:293.2px;top:234.2px;width:264.8px;height:15.4px;border:1px solid #e6dfc4;box-sizing:border-box;background:#fdf6dc"></div>
<div style="left:293.7px;top:234.7px;width:12.3px;height:14.4px;background:#c7f0c4"></div>
<div style="left:325.6px;width:200px;text-align:center;top:238.00px;font-size:9.61px;line-height:9.61px;color:#111;font-weight:bold;font-style:normal;white-space:pre;transform:scaleX(0.9259);transform-origin:50% 0;">Quote price proportion</div>
<div style="left:821.4px;top:234.2px;width:264.4px;height:15.4px;border:1px solid #e6dfc4;box-sizing:border-box;background:#fdf6dc"></div>
<div style="left:821.9px;top:234.7px;width:7.6px;height:14.4px;background:#b3e9f7"></div>
<div style="left:853.3px;width:200px;text-align:center;top:238.00px;font-size:9.61px;line-height:9.61px;color:#111;font-weight:bold;font-style:normal;white-space:pre;transform:scaleX(0.9259);transform-origin:50% 0;">Quote time proportion</div>
<div style="left:26.4px;top:253.8px;width:1327.1px;height:82px;background:#fff;border:1px solid #e4e4e4;box-sizing:border-box"></div>
<div style="left:26.4px;top:276.5px;width:1327.1px;height:1.2px;background:#646c8c"></div>
<div style="left:122.25px;top:254.5px;width:1.5px;height:22.5px;background:#747a95"></div>
<div style="left:168.35px;top:254.5px;width:1.5px;height:22.5px;background:#747a95"></div>
<div style="left:249.35px;top:254.5px;width:1.5px;height:22.5px;background:#747a95"></div>
<div style="left:325.85px;top:254.5px;width:1.5px;height:22.5px;background:#747a95"></div>
<div style="left:74.5px;top:254.5px;width:2px;height:81px;background:#6a6f86"></div>
<div style="left:20.9px;width:60px;text-align:center;top:263.00px;font-size:9.29px;line-height:9.29px;color:#6f6f6f;font-weight:bold;font-style:normal;white-space:pre;transform:scaleX(0.9259);transform-origin:50% 0;">Operation</div>
<div style="left:69.25px;width:60px;text-align:center;top:263.00px;font-size:9.29px;line-height:9.29px;color:#6f6f6f;font-weight:bold;font-style:normal;white-space:pre;transform:scaleX(0.9259);transform-origin:50% 0;">Unit price</div>
<div style="left:116.0px;width:60px;text-align:center;top:263.00px;font-size:9.29px;line-height:9.29px;color:#6f6f6f;font-weight:bold;font-style:normal;white-space:pre;transform:scaleX(0.9259);transform-origin:50% 0;">Unit time</div>
<div style="left:164.6px;width:90px;text-align:center;top:263.00px;font-size:9.29px;line-height:9.29px;color:#6f6f6f;font-weight:bold;font-style:normal;white-space:pre;transform:scaleX(0.9259);transform-origin:50% 0;">Unit product time</div>
<div style="left:243.3px;width:90px;text-align:center;top:263.00px;font-size:9.29px;line-height:9.29px;color:#6f6f6f;font-weight:bold;font-style:normal;white-space:pre;transform:scaleX(0.9259);transform-origin:50% 0;">Shared unit time</div>
<div style="left:78.5px;top:281px;width:32px;height:12px;background:#c6efc6"></div>
<div style="left:78.5px;top:301px;width:1.6px;height:12px;background:#c6efc6"></div>
<div style="left:127px;top:301px;width:4px;height:12px;background:#b3e9f7"></div>
<div style="left:173px;top:301px;width:8px;height:12px;background:#b3e9f7"></div>
<div style="left:71.5px;width:50px;text-align:right;top:282.00px;font-size:9.50px;line-height:9.50px;color:#111;font-weight:normal;font-style:italic;white-space:pre;transform:scaleX(0.9259);transform-origin:100% 0;">£21.65</div>
<div style="left:117.5px;width:50px;text-align:right;top:282.00px;font-size:9.50px;line-height:9.50px;color:#111;font-weight:normal;font-style:italic;white-space:pre;transform:scaleX(0.9259);transform-origin:100% 0;">0s</div>
<div style="left:198.5px;width:50px;text-align:right;top:282.00px;font-size:9.50px;line-height:9.50px;color:#111;font-weight:normal;font-style:italic;white-space:pre;transform:scaleX(0.9259);transform-origin:100% 0;">0s</div>
<div style="left:275px;width:50px;text-align:right;top:282.00px;font-size:9.50px;line-height:9.50px;color:#111;font-weight:normal;font-style:italic;white-space:pre;transform:scaleX(0.9259);transform-origin:100% 0;">0s</div>
<div style="left:71.5px;width:50px;text-align:right;top:302.00px;font-size:9.50px;line-height:9.50px;color:#111;font-weight:normal;font-style:italic;white-space:pre;transform:scaleX(0.9259);transform-origin:100% 0;">£1.22</div>
<div style="left:117.5px;width:50px;text-align:right;top:302.00px;font-size:9.50px;line-height:9.50px;color:#111;font-weight:normal;font-style:italic;white-space:pre;transform:scaleX(0.9259);transform-origin:100% 0;">10s</div>
<div style="left:198.5px;width:50px;text-align:right;top:302.00px;font-size:9.50px;line-height:9.50px;color:#111;font-weight:normal;font-style:italic;white-space:pre;transform:scaleX(0.9259);transform-origin:100% 0;">10s</div>
<div style="left:275px;width:50px;text-align:right;top:302.00px;font-size:9.50px;line-height:9.50px;color:#111;font-weight:normal;font-style:italic;white-space:pre;transform:scaleX(0.9259);transform-origin:100% 0;">0s</div>
<div style="left:71.5px;width:50px;text-align:right;top:321.00px;font-size:9.50px;line-height:9.50px;color:#666;font-weight:normal;font-style:normal;white-space:pre;transform:scaleX(0.9259);transform-origin:100% 0;">£22.87</div>
<div style="left:117.5px;width:50px;text-align:right;top:321.00px;font-size:9.50px;line-height:9.50px;color:#666;font-weight:normal;font-style:normal;white-space:pre;transform:scaleX(0.9259);transform-origin:100% 0;">10s</div>
<div style="left:198.5px;width:50px;text-align:right;top:321.00px;font-size:9.50px;line-height:9.50px;color:#666;font-weight:normal;font-style:normal;white-space:pre;transform:scaleX(0.9259);transform-origin:100% 0;">10s</div>
<div style="left:275px;width:50px;text-align:right;top:321.00px;font-size:9.50px;line-height:9.50px;color:#666;font-weight:normal;font-style:normal;white-space:pre;transform:scaleX(0.9259);transform-origin:100% 0;">0s</div>
<svg style="left:42px;top:281px;overflow:visible" width="15" height="14" viewBox="0 0 15 14"><svg viewBox="0 0 30 28" width="15" height="14" preserveAspectRatio="none"><clipPath id="mc11"><rect x="0" y="16.4" width="30" height="12"/></clipPath><g fill="#42a0f4"><path d="M0.3 9.5 L12.8 0.3 H29.7 V3.4 L23.2 10 H0.3 Z"/><path d="M0.3 11.4 H23.6 L29.7 5.2 V8.6 L22.6 15.4 H0.3 Z"/><path d="M11.8 27 L22.6 16.4 L29.7 9.9 V17.6 L19.8 27 Z"/></g><line x1="3.7" y1="24.6" x2="16.5" y2="14.5" stroke="#42a0f4" stroke-width="5.2" stroke-linecap="round" clip-path="url(#mc11)"/></svg></svg>
<svg style="left:42px;top:300px;overflow:visible" width="19" height="13" viewBox="0 0 19 13"><svg viewBox="0 0 38 24" width="19" height="13" preserveAspectRatio="none"><rect x="17.8" y="0" width="2.6" height="11.5" fill="#42a0f4"/><path d="M7.5 11 H29.5 L37.6 23.8 H0.4 Z" fill="#42a0f4"/><path d="M4 17.2 H13.5 M15.5 19.5 L19 14 L22.5 19.5" fill="none" stroke="#cfe6fb" stroke-width="0.9"/></svg></svg>
<div style="left:1149px;top:342.00px;font-size:9.61px;line-height:9.61px;color:#222;font-weight:normal;font-style:italic;white-space:pre;transform:scaleX(0.9259);transform-origin:0 0;">Value in italic is not editable</div>
<div style="left:1272.9px;top:340.7px;width:69.7px;height:10.8px;background:#d5d5d5"></div>
<div style="left:1274px;top:342.00px;font-size:9.43px;line-height:9.43px;color:#222;font-weight:normal;font-style:normal;white-space:pre;transform:scaleX(0.9259);transform-origin:0 0;">Quote operations</div>
<svg style="left:33px;top:369.8px;overflow:visible" width="30" height="27.5" viewBox="0 0 30 27.5"><svg viewBox="0 0 30 28" width="30" height="27.5" preserveAspectRatio="none"><clipPath id="mc12"><rect x="0" y="16.4" width="30" height="12"/></clipPath><g fill="#42a0f4"><path d="M0.3 9.5 L12.8 0.3 H29.7 V3.4 L23.2 10 H0.3 Z"/><path d="M0.3 11.4 H23.6 L29.7 5.2 V8.6 L22.6 15.4 H0.3 Z"/><path d="M11.8 27 L22.6 16.4 L29.7 9.9 V17.6 L19.8 27 Z"/></g><line x1="3.7" y1="24.6" x2="16.5" y2="14.5" stroke="#42a0f4" stroke-width="5.2" stroke-linecap="round" clip-path="url(#mc12)"/></svg></svg>
<svg style="left:194.3px;top:369.3px;overflow:visible" width="37.6" height="23.6" viewBox="0 0 37.6 23.6"><svg viewBox="0 0 38 24" width="37.6" height="23.6" preserveAspectRatio="none"><rect x="17.8" y="0" width="2.6" height="11.5" fill="#42a0f4"/><path d="M7.5 11 H29.5 L37.6 23.8 H0.4 Z" fill="#42a0f4"/><path d="M4 17.2 H13.5 M15.5 19.5 L19 14 L22.5 19.5" fill="none" stroke="#cfe6fb" stroke-width="0.9"/></svg></svg>
<div style="left:74.3px;top:359.4px;width:78.2px;height:23px;background:#cacaca"></div>
<div style="left:152.5px;top:359.4px;width:30.6px;height:23px;background:#fff;border:1px solid #747a95;border-right-width:1.5px;box-sizing:border-box"></div>
<div style="left:74.3px;top:381.6px;width:108.80000000000001px;height:1.2px;background:#747a95"></div>
<svg style="left:110.9px;top:361.5px;" width="5" height="4" viewBox="0 0 5 4"><path d="M0.5 3.2 L2.5 0.8 L4.5 3.2 Z" fill="#666"/></svg>
<div style="left:74.30000000000001px;width:78.2px;text-align:center;top:367.00px;font-size:9.50px;line-height:9.50px;color:#6f6f6f;font-weight:bold;font-style:normal;white-space:pre;transform:scaleX(0.9259);transform-origin:50% 0;">Variable</div>
<div style="left:152.5px;width:30.6px;text-align:center;top:367.00px;font-size:9.50px;line-height:9.50px;color:#6f6f6f;font-weight:bold;font-style:normal;white-space:pre;transform:scaleX(0.9259);transform-origin:50% 0;">Value</div>
<div style="left:74.3px;top:382.8px;width:108.80000000000001px;height:19.4px;background:#e8e8ee"></div>
<div style="left:78.5px;top:389.00px;font-size:9.50px;line-height:9.50px;color:#222;font-weight:normal;font-style:normal;white-space:pre;transform:scaleX(0.9259);transform-origin:0 0;">Customer Material</div>
<div style="left:149px;width:30px;text-align:right;top:389.00px;font-size:9.50px;line-height:9.50px;color:#222;font-weight:normal;font-style:normal;white-space:pre;transform:scaleX(0.9259);transform-origin:100% 0;">No</div>
<div style="left:235.4px;top:359.4px;width:74.8px;height:23px;background:#cacaca"></div>
<div style="left:310.2px;top:359.4px;width:29.3px;height:23px;background:#fff;border:1px solid #747a95;border-right-width:1.5px;box-sizing:border-box"></div>
<div style="left:339.5px;top:359.4px;width:5px;height:23px;background:#fff"></div>
<div style="left:343.5px;top:359.4px;width:1px;height:23px;background:#d0d0d0"></div>
<div style="left:235.4px;top:381.6px;width:109.1px;height:1.2px;background:#747a95"></div>
<svg style="left:270.3px;top:361.5px;" width="5" height="4" viewBox="0 0 5 4"><path d="M0.5 3.2 L2.5 0.8 L4.5 3.2 Z" fill="#666"/></svg>
<div style="left:235.4px;width:74.8px;text-align:center;top:367.00px;font-size:9.50px;line-height:9.50px;color:#6f6f6f;font-weight:bold;font-style:normal;white-space:pre;transform:scaleX(0.9259);transform-origin:50% 0;">Variable</div>
<div style="left:310.2px;width:29.3px;text-align:center;top:367.00px;font-size:9.50px;line-height:9.50px;color:#6f6f6f;font-weight:bold;font-style:normal;white-space:pre;transform:scaleX(0.9259);transform-origin:50% 0;">Value</div>
<div style="left:235.4px;top:382.8px;width:109.1px;height:19.4px;background:#e8e8ee"></div>
<div style="left:239.6px;top:389.00px;font-size:9.50px;line-height:9.50px;color:#222;font-weight:normal;font-style:normal;white-space:pre;transform:scaleX(0.9259);transform-origin:0 0;">Laser Cutting Gas</div>
<div style="left:305px;width:30px;text-align:right;top:389.00px;font-size:9.50px;line-height:9.50px;color:#222;font-weight:normal;font-style:normal;white-space:pre;transform:scaleX(0.9259);transform-origin:100% 0;">|</div>
<div style="left:1354px;top:106.5px;width:11px;height:695.5px;background:#fff"></div>
<div style="left:1353.5px;top:106.5px;width:1px;height:695.5px;background:#e6e6e6"></div>
<div style="left:1363.5px;top:106.5px;width:1.5px;height:695.5px;background:#e9e9e9"></div>
<div style="left:1357.8px;top:280px;width:3.4px;height:260px;background:#c6c6c6"></div>
<svg style="left:1356px;top:109px;" width="6" height="5" viewBox="0 0 6 5"><path d="M0.5 4 L3 1 L5.5 4 Z" fill="#777"/></svg>
<svg style="left:1356px;top:794px;" width="6" height="5" viewBox="0 0 6 5"><path d="M0.5 1 L3 4 L5.5 1 Z" fill="#777"/></svg>
<div style="left:0px;top:801px;width:1365px;height:1px;background:#d6d6d6"></div>
</body></html>
